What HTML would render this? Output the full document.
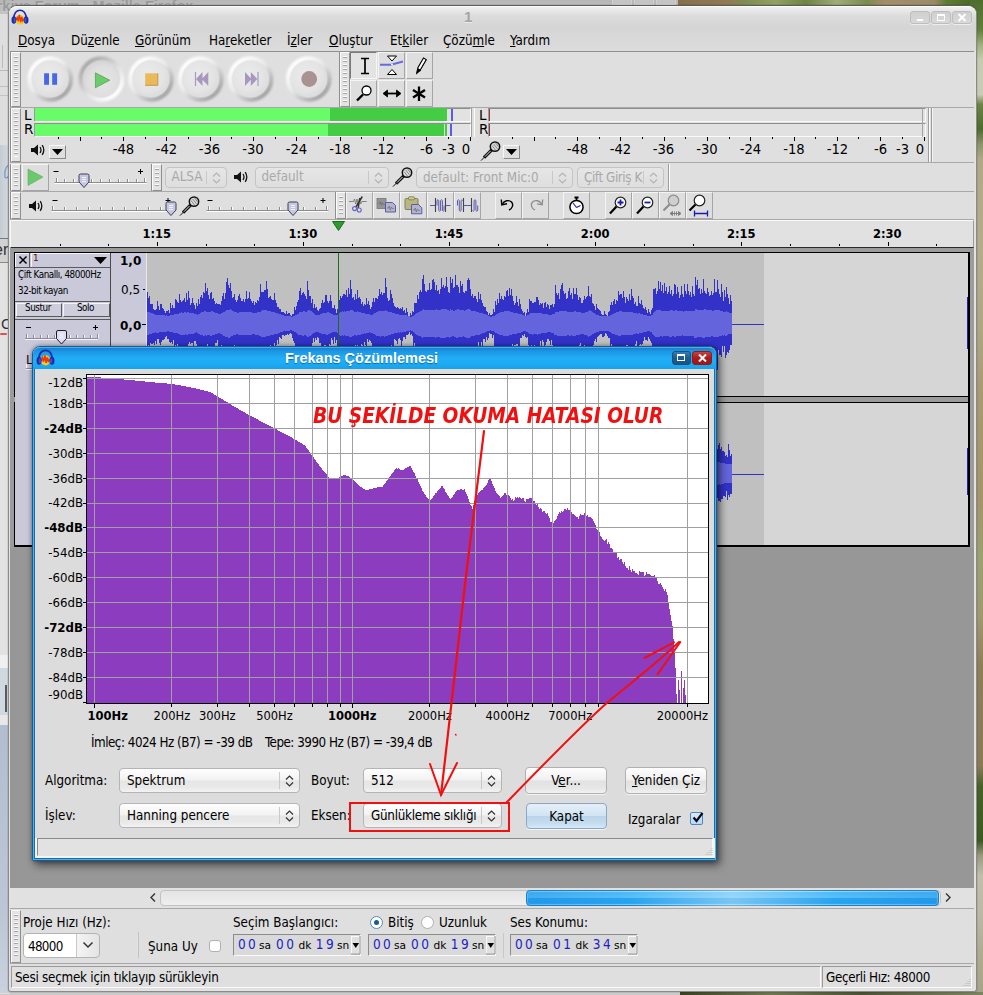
<!DOCTYPE html>
<html lang="tr"><head><meta charset="utf-8"><title>Audacity - Frekans Çözümlemesi</title>
<style>
*{box-sizing:border-box;margin:0;padding:0}
html,body{width:983px;height:995px;overflow:hidden;background:#9a9a9a}
body{font-family:"DejaVu Sans Condensed","Liberation Sans",sans-serif;font-size:13.3px;color:#000}
#root{position:absolute;left:0;top:0;width:983px;height:995px;overflow:hidden;background:#d9d9d9}
.a{position:absolute}
.t{position:absolute;white-space:nowrap;line-height:1}
.dv{font-family:"DejaVu Sans","Liberation Sans",sans-serif}
.dvb{font-family:"DejaVu Sans","Liberation Sans",sans-serif;font-weight:bold}
.lib{font-family:"Liberation Sans",sans-serif}
u{text-decoration:underline;text-underline-offset:1px}
.grab{position:absolute;width:10px;background-color:#e3e3e3;border:1px solid #fbfbfb;border-right-color:#8e8e8e;border-bottom-color:#8e8e8e;
 background-image:repeating-linear-gradient(to bottom,#fdfdfd 0,#fdfdfd 1px,#a4a4a4 1px,#a4a4a4 2px,transparent 2px,transparent 4px);background-size:4px calc(100% - 7px);background-position:2px 3px;background-repeat:no-repeat;box-shadow:-1px 0 0 #8e8e8e}
.tb{position:absolute;background:#dfdfdf}
.btn{position:absolute;background:#dedede;border:1px solid #f4f4f4;border-right-color:#a5a5a5;border-bottom-color:#a5a5a5}
.combo{position:absolute;border:1px solid #b4b4b4;border-radius:4px;background:linear-gradient(#fefefe 0,#f2f2f2 48%,#e6e6e6 52%,#e9e9e9 80%,#f3f3f3 100%);}
.combo.dis{background:linear-gradient(#e6e6e6,#dedede);border-color:#c4c4c4;color:#a9a9a9}
.combo .sep{position:absolute;top:3px;bottom:3px;width:1px;background:#c9c9c9;right:19px}
.combo svg{position:absolute;right:5px;top:50%;margin-top:-6px}
</style></head><body>
<div id="root">
<!-- desktop / background windows -->
<div class="a" style="left:0;top:0;width:983px;height:995px;background:#d6d6d6"></div>
<div class="a" style="left:0;top:0;width:680px;height:14px;background:linear-gradient(#b6b6b6,#c4c4c4)"></div>
<div class="t lib" style="left:-21px;top:-1px;font-size:14.500px;font-weight:bold;color:#9a9a9a;text-shadow:0 1px 0 #cfcfcf">Türkiye Forum - Mozilla Firefox</div>
<div class="a" style="left:612px;top:0;width:20px;height:5px;background:#c4c4c4;border:1px solid #d0d0d0;border-top:0"></div>
<div class="a" style="left:634px;top:0;width:20px;height:5px;background:#c4c4c4;border:1px solid #d0d0d0;border-top:0"></div>
<div class="a" style="left:656px;top:0;width:20px;height:5px;background:#c4c4c4;border:1px solid #d0d0d0;border-top:0"></div>
<!-- wallpaper top right & right strip -->
<div class="a" style="left:678px;top:0;width:305px;height:12px;background:linear-gradient(90deg,#86704c 0,#927a56 17%,#7e8a4e 21%,#92a062 32%,#6e8444 42%,#a0ac78 52%,#7a8c4c 62%,#a48e6a 68%,#9c8a66 84%,#5e7c34 88%,#4a6a28 96%,#5a7a34 100%)"></div>
<div class="a" style="left:970px;top:0;width:13px;height:995px;background:linear-gradient(180deg,#4e6e2e 0,#5f8038 3%,#9fb07c 4.500%,#c6cbb0 6%,#c9ccb4 9.500%,#6a8444 10.500%,#4e6c30 13%,#8c9468 14.500%,#b0a888 16%,#b4ac8c 25%,#aea684 33%,#a89a72 40%,#a4946c 50%,#9ca072 56%,#a09870 62%,#8e7e5a 67%,#8a7a58 77%,#46622a 79%,#3c5a22 84.500%,#9a9a80 86%,#c2beaa 88%,#bcb8a4 92%,#b0aa92 96%,#a8a288 100%)"></div>
<div class="a" style="left:0;top:992px;width:983px;height:3px;background:#c9c9c9"></div>
<div class="a" style="left:680px;top:992px;width:303px;height:3px;background:linear-gradient(90deg,#3a4020,#6d7550 30%,#4a5233 60%,#7b8360)"></div>
<!-- left strip: firefox window pieces -->
<div class="a" style="left:0;top:14px;width:10px;height:980px;background:#dedede"></div>
<div class="a" style="left:2px;top:45px;width:1px;height:23px;background:#bcbcbc"></div>
<div class="a" style="left:0;top:70px;width:10px;height:1px;background:#b8b8b8"></div>
<div class="a" style="left:0;top:86px;width:10px;height:1px;background:#c0c0c0"></div>
<div class="a" style="left:0;top:95px;width:10px;height:1px;background:#c4c4c4"></div>
<div class="a" style="left:0;top:145px;width:10px;height:93px;background:linear-gradient(90deg,#c4ccd4,#d6dadd)"></div>
<svg class="a" style="left:2px;top:164px" width="8" height="16" viewBox="0 0 8 16"><path d="M6.500 1 C3 4 2.500 9 3 13 C3.500 14.500 5.500 14 6.500 12" fill="none" stroke="#7a9acc" stroke-width="1.300"/></svg>
<div class="a" style="left:0;top:238px;width:10px;height:1px;background:#7a7a7a"></div>
<div class="a" style="left:0;top:239px;width:10px;height:23px;background:#d2d2d2"></div>
<div class="a" style="left:0;top:262px;width:10px;height:1px;background:#8a8a8a"></div>
<div class="a" style="left:0;top:263px;width:10px;height:392px;background:#e2e2e2"></div>
<div class="a" style="left:0;top:655px;width:10px;height:13px;background:#f0f0f0"></div>
<div class="a" style="left:0;top:668px;width:10px;height:47px;background:#d0d8e0"></div>
<div class="a" style="left:5px;top:685px;width:2px;height:27px;background:#5a5a5a"></div>
<div class="a" style="left:0;top:715px;width:10px;height:10px;background:#e8e8e8"></div>
<div class="a" style="left:0;top:725px;width:10px;height:268px;background:linear-gradient(#b2bed0,#bcc6d6 70%,#cad2de)"></div>
<div class="t lib" style="left:-6px;top:242px;font-size:16px;color:#333">er</div>
<div class="t lib" style="left:1px;top:316px;font-size:15px;color:#333">C</div>
<div class="a" style="left:0;top:333px;width:7px;height:2px;background:#e05050;border-radius:1px"></div>
<!-- main window frame -->
<div class="a" style="left:8px;top:5px;width:969px;height:987px;border-radius:9px 9px 3px 3px;background:#e2e2e2;border:1px solid #8a8a8a;border-top-color:#5c5c5c;box-shadow:0 0 0 1px rgba(0,0,0,.08)"></div>
<div class="a" style="left:10px;top:52px;width:964px;height:937px;background:#dfdfdf"></div>
<div class="a" style="left:9px;top:6px;width:967px;height:23px;border-radius:8px 8px 0 0;background:linear-gradient(#f0f0f0,#dcdcdc 40%,#d4d4d4);border-top:1px solid #fbfbfb"></div>
<div class="a" style="left:9px;top:29px;width:967px;height:22px;background:linear-gradient(#d6d6d6,#dcdcdc)"></div>
<div class="a" style="left:10px;top:51px;width:964px;height:1px;background:#8f8f8f"></div>
<div class="t lib" style="left:464px;top:9px;font-size:15px;font-weight:bold;color:#a2a2aa;text-shadow:0 1px 0 #ececec">1</div>
<!-- app icon -->
<svg class="a" style="left:11px;top:9px" width="18" height="17" viewBox="0 0 18 17"><path d="M2.800 10 C2.500 3.500 6 1.200 9 1.200 C12 1.200 15.500 3.500 15.200 10" fill="none" stroke="#1c2ca4" stroke-width="1.600"/><ellipse cx="9" cy="10.800" rx="4.600" ry="4.800" fill="#f8c81c"/><path d="M5 11 l1.200 -2.500 1 3.500 1.200 -6 1.200 7 1.100 -5 1 3.500 1.100 -1.500" fill="none" stroke="#ea3a12" stroke-width="1.500"/><ellipse cx="2.900" cy="11" rx="2.400" ry="3.800" fill="#1c2ca4"/><ellipse cx="15.100" cy="11" rx="2.400" ry="3.800" fill="#1c2ca4"/><ellipse cx="3.600" cy="11" rx="1.100" ry="2.600" fill="#3a52d8"/><ellipse cx="14.400" cy="11" rx="1.100" ry="2.600" fill="#3a52d8"/></svg>
<!-- window buttons -->
<div class="a" style="left:910px;top:11px;width:20px;height:13px;border-radius:3px;background:linear-gradient(#cfcfcf,#d9d9d9);border:1px solid #bdbdbd;box-shadow:0 1px 0 #eee"></div>
<div class="a" style="left:931px;top:11px;width:20px;height:13px;border-radius:3px;background:linear-gradient(#cfcfcf,#d9d9d9);border:1px solid #bdbdbd;box-shadow:0 1px 0 #eee"></div>
<div class="a" style="left:952px;top:11px;width:20px;height:13px;border-radius:3px;background:linear-gradient(#cfcfcf,#d9d9d9);border:1px solid #bdbdbd;box-shadow:0 1px 0 #eee"></div>
<div class="a" style="left:917px;top:19px;width:6px;height:2px;background:#fff"></div>
<div class="a" style="left:937px;top:14px;width:8px;height:7px;border:1px solid #fff;border-top-width:2px"></div>
<svg class="a" style="left:957px;top:13px" width="10" height="9" viewBox="0 0 10 9"><path d="M1.500 1 L8.500 8 M8.500 1 L1.500 8" stroke="#fff" stroke-width="2"/></svg>
<!-- menu -->
<div class="t" style="left:18px;top:34px"><u>D</u>osya</div>
<div class="t" style="left:71px;top:34px">Dü<u>z</u>enle</div>
<div class="t" style="left:135px;top:34px"><u>G</u>örünüm</div>
<div class="t" style="left:209px;top:34px">Ha<u>r</u>eketler</div>
<div class="t" style="left:287px;top:34px">İ<u>z</u>ler</div>
<div class="t" style="left:329px;top:34px"><u>O</u>luştur</div>
<div class="t" style="left:390px;top:34px">Et<u>k</u>iler</div>
<div class="t" style="left:443px;top:34px">Çözü<u>m</u>le</div>
<div class="t" style="left:510px;top:34px"><u>Y</u>ardım</div>
<!-- ===== control toolbar ===== -->
<div class="grab" style="left:11px;top:52px;height:55px"></div>
<svg class="a" style="left:20px;top:52px" width="320" height="55" viewBox="20 52 320 55">
<defs>
<linearGradient id="rup" x1="0.15" y1="0.1" x2="0.85" y2="0.9"><stop offset="0" stop-color="#ffffff"/><stop offset=".45" stop-color="#e9e9e9"/><stop offset="1" stop-color="#a2a2a2"/></linearGradient>
<linearGradient id="rdn" x1="0.15" y1="0.1" x2="0.85" y2="0.9"><stop offset="0" stop-color="#a8a8a8"/><stop offset=".55" stop-color="#e0e0e0"/><stop offset="1" stop-color="#ffffff"/></linearGradient>
<radialGradient id="dup" cx=".42" cy=".4" r=".6"><stop offset="0" stop-color="#ebebeb"/><stop offset=".7" stop-color="#e4e4e4"/><stop offset="1" stop-color="#dcdcdc"/></radialGradient>
<radialGradient id="ddn" cx=".55" cy=".58" r=".6"><stop offset="0" stop-color="#e6e6e6"/><stop offset=".7" stop-color="#dedede"/><stop offset="1" stop-color="#d2d2d2"/></radialGradient>
<filter id="bl" x="-20%" y="-20%" width="140%" height="140%"><feGaussianBlur stdDeviation="1.300"/></filter>
<g id="bup"><circle r="20.500" fill="none" stroke="url(#rup)" stroke-width="4.500" filter="url(#bl)"/><circle r="18.500" fill="url(#dup)"/></g>
<g id="bdn"><circle r="20.500" fill="none" stroke="url(#rdn)" stroke-width="4.500" filter="url(#bl)"/><circle r="18.500" fill="url(#ddn)"/></g>
</defs>
<use href="#bup" x="50.200" y="79"/><use href="#bdn" x="101.400" y="79"/><use href="#bup" x="151" y="79"/><use href="#bup" x="200.700" y="79"/><use href="#bup" x="250.600" y="79"/><use href="#bup" x="308.700" y="79"/>
<rect x="44.100" y="73.300" width="4.900" height="11.500" fill="#4868e8"/><rect x="52.200" y="73.300" width="4.900" height="11.500" fill="#4868e8"/>
<path d="M95.400 72.800 L109.800 80.200 L95.400 87.800 Z" fill="#6ccb6c" stroke="#4ea04e" stroke-width=".7"/>
<rect x="145.200" y="73.300" width="12.600" height="12" fill="#e9b95c"/><path d="M145.200 85.300 h12.600 v-12" fill="none" stroke="#c09848" stroke-width="1"/>
<path d="M195.500 72 v14" stroke="#a898c0" stroke-width="1.200"/><path d="M202.500 72 v14 l-6.500 -7z M208.300 72 v14 l-6.500 -7z" fill="#a898c0"/>
<path d="M258 72 v14" stroke="#a898c0" stroke-width="1.200"/><path d="M245 72 v14 l6.500 -7z M250.800 72 v14 l6.500 -7z" fill="#a898c0"/>
<circle cx="309.200" cy="79" r="7.900" fill="#a89292"/>
</svg>
<!-- ===== tools toolbar ===== -->
<div class="grab" style="left:340px;top:52px;height:55px"></div>
<div class="btn" style="left:350px;top:52px;width:27px;height:27px;background:#e3e3e3;border-color:#7a7a7a #f6f6f6 #f6f6f6 #7a7a7a"></div>
<div class="btn" style="left:378px;top:52px;width:27px;height:27px"></div>
<div class="btn" style="left:406px;top:52px;width:27px;height:27px"></div>
<div class="btn" style="left:350px;top:80px;width:27px;height:27px"></div>
<div class="btn" style="left:378px;top:80px;width:27px;height:27px"></div>
<div class="btn" style="left:406px;top:80px;width:27px;height:27px"></div>
<svg class="a" style="left:350px;top:52px" width="84" height="56" viewBox="0 0 84 56" fill="none" stroke="#000">
<path d="M11 6.500 h8 M15 6.500 v14.500 M11 21.500 h8" stroke-width="1.700"/>
<path d="M37.500 4 h9 l-4.500 5 z M37.500 22.500 h9 l-4.500 -5 z" fill="#fff" stroke-width="1"/><path d="M30 12.800 h11 l12 -3.300" stroke="#6a6ae0" stroke-width="2"/><circle cx="42" cy="12.600" r="1" fill="#fff" stroke="none"/>
<path d="M66.800 21 l1.200 -5.500 5.500 -9.500 2.800 1.600 -5.500 9.500 z" fill="#fff" stroke-width="1.100"/><path d="M66.600 21.500 l1.200 -5 3.200 1.800z" fill="#000" stroke-width=".6"/>
<circle cx="16.500" cy="38.500" r="4.500" fill="#fff" stroke-width="1.300"/><path d="M13 42.500 L7 48.500" stroke-width="2.400"/>
<path d="M34 41.500 h16" stroke-width="1.800"/><path d="M37.500 38 l-4.500 3.500 4.500 3.500 z M46.500 38 l4.500 3.500 -4.500 3.500 z" stroke-width=".8" fill="#000"/>
<path d="M69 34.500 v14.500 M63 38 l12 7.500 M75 38 l-12 7.500" stroke-width="2.300"/>
</svg>
<!-- ===== meter toolbar ===== -->
<div class="a" style="left:10px;top:107px;width:964px;height:1px;background:#a8a8a8"></div>
<div class="grab" style="left:11px;top:108px;height:54px"></div>
<div class="t dv" style="left:24px;top:109px;font-size:13.500px;line-height:13px">L</div>
<div class="t dv" style="left:24px;top:123px;font-size:13.500px;line-height:13px">R</div>
<div class="a" style="left:34px;top:108px;width:437px;height:14px;background:#e2e2e2;border:1px solid #fafafa;border-left-color:#9a9a9a;border-top-color:#8e8e8e"></div>
<div class="a" style="left:34px;top:123px;width:437px;height:14px;background:#e2e2e2;border:1px solid #fafafa;border-left-color:#9a9a9a;border-top-color:#8e8e8e"></div>
<div class="a" style="left:35px;top:108px;width:295px;height:13px;background:#68fc68"></div>
<div class="a" style="left:330px;top:108px;width:117px;height:13px;background:#44cc44"></div>
<div class="a" style="left:35px;top:124px;width:293px;height:12px;background:#68fc68"></div>
<div class="a" style="left:328px;top:124px;width:116px;height:12px;background:#44cc44"></div>
<div class="a" style="left:445px;top:124px;width:2px;height:12px;background:#44cc44"></div>
<div class="a" style="left:451px;top:109px;width:2px;height:12px;background:#5a5af0"></div>
<div class="a" style="left:450px;top:124px;width:2px;height:12px;background:#5a5af0"></div>
<div class="a" style="left:471px;top:108px;width:1px;height:29px;background:#a2a2a2"></div>
<div class="a" style="left:474px;top:108px;width:1px;height:29px;background:#fafafa"></div>
<div class="t dv" style="left:479px;top:109px;font-size:13.500px;line-height:13px">L</div>
<div class="t dv" style="left:479px;top:123px;font-size:13.500px;line-height:13px">R</div>
<div class="a" style="left:488px;top:108px;width:438px;height:14px;background:#e1e1e1;border:1px solid #fafafa;border-left-color:#9a9a9a;border-top-color:#8e8e8e"></div>
<div class="a" style="left:488px;top:123px;width:438px;height:14px;background:#e1e1e1;border:1px solid #fafafa;border-left-color:#9a9a9a;border-top-color:#8e8e8e"></div>
<div class="a" style="left:489px;top:109px;width:1px;height:12px;background:#a43434"></div>
<div class="a" style="left:489px;top:124px;width:1px;height:12px;background:#a43434"></div>
<div class="a" style="left:922px;top:108px;width:1px;height:29px;background:#a4a4a4"></div>
<div class="a" style="left:928px;top:108px;width:1px;height:54px;background:#9c9c9c"></div>
<div class="a" style="left:929px;top:108px;width:1px;height:54px;background:#fff"></div>
<div class="a" style="left:931px;top:108px;width:1px;height:54px;background:#9c9c9c"></div>
<div class="a" style="left:932px;top:108px;width:1px;height:54px;background:#f4f4f4"></div>
<svg class="a" style="left:0;top:137px" width="983" height="26" viewBox="0 0 983 26"><g font-family="DejaVu Sans,Liberation Sans,sans-serif" font-size="13.200" text-anchor="middle" fill="#000"><text x="123.5" y="17">-48</text><text x="166.5" y="17">-42</text><text x="209.5" y="17">-36</text><text x="253.0" y="17">-30</text><text x="296.5" y="17">-24</text><text x="340.0" y="17">-18</text><text x="383.5" y="17">-12</text><text x="426.5" y="17">-6</text><text x="448.5" y="17">-3</text><text x="466.0" y="17">0</text></g><g stroke="#000" stroke-width="1"><path d="M58.5 0 v2"/><path d="M80.5 0 v4"/><path d="M101.5 0 v2"/><path d="M123.5 0 v4"/><path d="M145.5 0 v2"/><path d="M166.5 0 v4"/><path d="M188.5 0 v2"/><path d="M210.5 0 v4"/><path d="M231.5 0 v2"/><path d="M253.5 0 v4"/><path d="M275.5 0 v2"/><path d="M296.5 0 v4"/><path d="M318.5 0 v2"/><path d="M340.5 0 v4"/><path d="M361.5 0 v2"/><path d="M383.5 0 v4"/><path d="M404.5 0 v2"/><path d="M426.5 0 v4"/><path d="M448.5 0 v2"/><path d="M470.5 0 v4"/></g></svg>
<svg class="a" style="left:0;top:137px" width="983" height="26" viewBox="0 0 983 26"><g font-family="DejaVu Sans,Liberation Sans,sans-serif" font-size="13.200" text-anchor="middle" fill="#000"><text x="577.5" y="17">-48</text><text x="620.5" y="17">-42</text><text x="663.5" y="17">-36</text><text x="707.0" y="17">-30</text><text x="750.5" y="17">-24</text><text x="794.0" y="17">-18</text><text x="837.5" y="17">-12</text><text x="880.5" y="17">-6</text><text x="902.5" y="17">-3</text><text x="920.0" y="17">0</text></g><g stroke="#000" stroke-width="1"><path d="M512.5 0 v2"/><path d="M534.5 0 v4"/><path d="M555.5 0 v2"/><path d="M577.5 0 v4"/><path d="M599.5 0 v2"/><path d="M620.5 0 v4"/><path d="M642.5 0 v2"/><path d="M664.5 0 v4"/><path d="M685.5 0 v2"/><path d="M707.5 0 v4"/><path d="M729.5 0 v2"/><path d="M750.5 0 v4"/><path d="M772.5 0 v2"/><path d="M794.5 0 v4"/><path d="M815.5 0 v2"/><path d="M837.5 0 v4"/><path d="M858.5 0 v2"/><path d="M880.5 0 v4"/><path d="M902.5 0 v2"/><path d="M924.5 0 v4"/></g></svg>
<svg class="a" style="left:30px;top:143px" width="16" height="14" viewBox="0 0 16 14"><path d="M1 5 h3 l4 -3.500 v11 l-4 -3.500 h-3 z" fill="#111"/><path d="M10 4 q2 3 0 6 M12.200 2.200 q3.200 4.800 0 9.600" fill="none" stroke="#111" stroke-width="1.300"/></svg>
<div class="btn" style="left:49px;top:145px;width:17px;height:14px;border-color:#f8f8f8 #8a8a8a #8a8a8a #f8f8f8"></div><svg class="a" style="left:52px;top:149px" width="11" height="6" viewBox="0 0 11 6"><path d="M0 0 h11 l-5.500 6z" fill="#000"/></svg>
<div class="btn" style="left:503px;top:145px;width:17px;height:14px;border-color:#f8f8f8 #8a8a8a #8a8a8a #f8f8f8"></div><svg class="a" style="left:506px;top:149px" width="11" height="6" viewBox="0 0 11 6"><path d="M0 0 h11 l-5.500 6z" fill="#000"/></svg>
<svg class="a" style="left:480px;top:140px" width="22" height="22" viewBox="0 0 22 22"><path d="M1 20.600 L5 16.500" stroke="#111" stroke-width="1"/><path d="M4 17.700 L11.800 9.800" stroke="#111" stroke-width="3.200"/><path d="M5 16.600 L10.500 11" stroke="#f4f4f4" stroke-width=".9"/><circle cx="15" cy="6.600" r="4.700" fill="#dadada" stroke="#111" stroke-width="1.500"/><path d="M12 5.500 l3.500 4.500 M13.500 3.800 l4 5 M15.500 2.800 l3 4" stroke="#8a8a8a" stroke-width="1"/></svg>
<div class="a" style="left:10px;top:162px;width:964px;height:1px;background:#a8a8a8"></div>
<!-- ===== transcription toolbar ===== -->
<div class="grab" style="left:11px;top:164px;height:27px"></div>
<div class="btn" style="left:22px;top:164px;width:27px;height:27px"></div>
<svg class="a" style="left:22px;top:164px" width="27" height="27" viewBox="0 0 27 27"><path d="M6 5 L21 13 L6 21.500 Z" fill="#6cc86c" stroke="#5cb05c" stroke-width=".6"/></svg>
<svg class="a" style="left:0;top:168px" width="983" height="24" viewBox="0 0 983 24"><path d="M54.5 14.500 H146.5" stroke="#8c8c8c"/><path d="M54.5 15.500 H146.5" stroke="#fff"/><path d="M56.5 10 V14" stroke="#8c8c8c"/><path d="M57.5 10 V14" stroke="#fff"/><path d="M64.5 11 V14" stroke="#8c8c8c"/><path d="M65.5 11 V14" stroke="#fff"/><path d="M73.5 11 V14" stroke="#8c8c8c"/><path d="M74.5 11 V14" stroke="#fff"/><path d="M82.5 11 V14" stroke="#8c8c8c"/><path d="M83.5 11 V14" stroke="#fff"/><path d="M91.5 11 V14" stroke="#8c8c8c"/><path d="M92.5 11 V14" stroke="#fff"/><path d="M100.5 11 V14" stroke="#8c8c8c"/><path d="M101.5 11 V14" stroke="#fff"/><path d="M109.5 11 V14" stroke="#8c8c8c"/><path d="M110.5 11 V14" stroke="#fff"/><path d="M118.5 11 V14" stroke="#8c8c8c"/><path d="M119.5 11 V14" stroke="#fff"/><path d="M127.5 11 V14" stroke="#8c8c8c"/><path d="M128.5 11 V14" stroke="#fff"/><path d="M136.5 11 V14" stroke="#8c8c8c"/><path d="M137.5 11 V14" stroke="#fff"/><path d="M144.5 10 V14" stroke="#8c8c8c"/><path d="M145.5 10 V14" stroke="#fff"/><path d="M53.5 3.5 h5 M138.0 3.5 h5 M140.5 1.0 v5" stroke="#000" stroke-width="1"/><path d="M79.0 7.500 q0 -1.500 1.500 -1.500 h7 q1.500 0 1.500 1.500 v6.500 l-5 5.500 l-5 -5.500 z" fill="#c6c6e6" stroke="#3c3c50" stroke-width="1"/><path d="M82.0 9.500 h4 M82.0 11.500 h4 M82.0 13.500 h4" stroke="#f4f4ff" stroke-width="1"/></svg>
<div class="a" style="left:10px;top:191px;width:964px;height:1px;background:#a8a8a8"></div>
<!-- ===== device toolbar ===== -->
<div class="grab" style="left:152px;top:164px;height:27px"></div>
<div class="combo dis" style="left:165px;top:167px;width:62px;height:21px"><div class="t" style="left:5.5px;top:2.3px;font-size:13.3px">ALSA</div><div class="sep"></div><svg width="9" height="12" viewBox="0 0 9 12"><path d="M1 4.500 L4.500 1 L8 4.500 M1 7.500 L4.500 11 L8 7.500" fill="none" stroke="#b4b4b4" stroke-width="1.200"/></svg></div>
<div class="combo dis" style="left:255px;top:167px;width:134px;height:21px"><div class="t" style="left:5.5px;top:2.3px;font-size:13.3px">default</div><div class="sep"></div><svg width="9" height="12" viewBox="0 0 9 12"><path d="M1 4.500 L4.500 1 L8 4.500 M1 7.500 L4.500 11 L8 7.500" fill="none" stroke="#b4b4b4" stroke-width="1.200"/></svg></div>
<div class="combo dis" style="left:416px;top:167px;width:157px;height:21px;overflow:hidden"><div class="t" style="left:6px;top:3px;font-size:13.3px">default: Front Mic:0</div><div class="sep"></div><svg width="9" height="12" viewBox="0 0 9 12"><path d="M1 4.500 L4.500 1 L8 4.500 M1 7.500 L4.500 11 L8 7.500" fill="none" stroke="#b4b4b4" stroke-width="1.200"/></svg></div>
<div class="combo dis" style="left:577px;top:167px;width:87px;height:21px;overflow:hidden"><div class="t" style="left:6px;top:3px;font-size:13.3px;letter-spacing:-.42px">Çift Giriş K</div><div class="sep"></div><svg width="9" height="12" viewBox="0 0 9 12"><path d="M1 4.500 L4.500 1 L8 4.500 M1 7.500 L4.500 11 L8 7.500" fill="none" stroke="#b4b4b4" stroke-width="1.200"/></svg></div>
<svg class="a" style="left:233px;top:170px" width="16" height="14" viewBox="0 0 16 14"><path d="M1 5 h3 l4 -3.500 v11 l-4 -3.500 h-3 z" fill="#111"/><path d="M10 4 q2 3 0 6 M12.200 2.200 q3.200 4.800 0 9.600" fill="none" stroke="#111" stroke-width="1.300"/></svg>
<svg class="a" style="left:392px;top:166px" width="22" height="22" viewBox="0 0 22 22"><path d="M1 20.600 L5 16.500" stroke="#111" stroke-width="1"/><path d="M4 17.700 L11.800 9.800" stroke="#111" stroke-width="3.200"/><path d="M5 16.600 L10.500 11" stroke="#f4f4f4" stroke-width=".9"/><circle cx="15" cy="6.600" r="4.700" fill="#dadada" stroke="#111" stroke-width="1.500"/><path d="M12 5.500 l3.500 4.500 M13.500 3.800 l4 5 M15.500 2.800 l3 4" stroke="#8a8a8a" stroke-width="1"/></svg>
<div class="a" style="left:668px;top:164px;width:1px;height:27px;background:#9c9c9c"></div><div class="a" style="left:669px;top:164px;width:1px;height:27px;background:#fff"></div>
<!-- ===== mixer toolbar ===== -->
<div class="grab" style="left:11px;top:192px;height:27px"></div>
<svg class="a" style="left:28px;top:199px" width="16" height="14" viewBox="0 0 16 14"><path d="M1 5 h3 l4 -3.500 v11 l-4 -3.500 h-3 z" fill="#111"/><path d="M10 4 q2 3 0 6 M12.200 2.200 q3.200 4.800 0 9.600" fill="none" stroke="#111" stroke-width="1.300"/></svg>
<svg class="a" style="left:0;top:196px" width="983" height="24" viewBox="0 0 983 24"><path d="M51.5 14.500 H173.5" stroke="#8c8c8c"/><path d="M51.5 15.500 H173.5" stroke="#fff"/><path d="M52.5 10 V14" stroke="#8c8c8c"/><path d="M53.5 10 V14" stroke="#fff"/><path d="M64.5 11 V14" stroke="#8c8c8c"/><path d="M65.5 11 V14" stroke="#fff"/><path d="M76.5 11 V14" stroke="#8c8c8c"/><path d="M77.5 11 V14" stroke="#fff"/><path d="M88.5 11 V14" stroke="#8c8c8c"/><path d="M89.5 11 V14" stroke="#fff"/><path d="M100.5 11 V14" stroke="#8c8c8c"/><path d="M101.5 11 V14" stroke="#fff"/><path d="M112.5 11 V14" stroke="#8c8c8c"/><path d="M113.5 11 V14" stroke="#fff"/><path d="M124.5 11 V14" stroke="#8c8c8c"/><path d="M125.5 11 V14" stroke="#fff"/><path d="M136.5 11 V14" stroke="#8c8c8c"/><path d="M137.5 11 V14" stroke="#fff"/><path d="M148.5 11 V14" stroke="#8c8c8c"/><path d="M149.5 11 V14" stroke="#fff"/><path d="M160.5 11 V14" stroke="#8c8c8c"/><path d="M161.5 11 V14" stroke="#fff"/><path d="M172.5 10 V14" stroke="#8c8c8c"/><path d="M173.5 10 V14" stroke="#fff"/><path d="M52.5 4.5 h5 M165.5 4.5 h5 M168.0 2.0 v5" stroke="#000" stroke-width="1"/><path d="M166.0 7.500 q0 -1.500 1.500 -1.500 h7 q1.500 0 1.500 1.500 v6.500 l-5 5.500 l-5 -5.500 z" fill="#c6c6e6" stroke="#3c3c50" stroke-width="1"/><path d="M169.0 9.500 h4 M169.0 11.500 h4 M169.0 13.500 h4" stroke="#f4f4ff" stroke-width="1"/></svg>
<svg class="a" style="left:179px;top:195px" width="22" height="22" viewBox="0 0 22 22"><path d="M1 20.600 L5 16.500" stroke="#111" stroke-width="1"/><path d="M4 17.700 L11.800 9.800" stroke="#111" stroke-width="3.200"/><path d="M5 16.600 L10.500 11" stroke="#f4f4f4" stroke-width=".9"/><circle cx="15" cy="6.600" r="4.700" fill="#dadada" stroke="#111" stroke-width="1.500"/><path d="M12 5.500 l3.500 4.500 M13.500 3.800 l4 5 M15.500 2.800 l3 4" stroke="#8a8a8a" stroke-width="1"/></svg>
<svg class="a" style="left:0;top:196px" width="983" height="24" viewBox="0 0 983 24"><path d="M206.5 14.500 H328.5" stroke="#8c8c8c"/><path d="M206.5 15.500 H328.5" stroke="#fff"/><path d="M208.5 10 V14" stroke="#8c8c8c"/><path d="M209.5 10 V14" stroke="#fff"/><path d="M219.5 11 V14" stroke="#8c8c8c"/><path d="M220.5 11 V14" stroke="#fff"/><path d="M231.5 11 V14" stroke="#8c8c8c"/><path d="M232.5 11 V14" stroke="#fff"/><path d="M243.5 11 V14" stroke="#8c8c8c"/><path d="M244.5 11 V14" stroke="#fff"/><path d="M255.5 11 V14" stroke="#8c8c8c"/><path d="M256.5 11 V14" stroke="#fff"/><path d="M267.5 11 V14" stroke="#8c8c8c"/><path d="M268.5 11 V14" stroke="#fff"/><path d="M279.5 11 V14" stroke="#8c8c8c"/><path d="M280.5 11 V14" stroke="#fff"/><path d="M291.5 11 V14" stroke="#8c8c8c"/><path d="M292.5 11 V14" stroke="#fff"/><path d="M303.5 11 V14" stroke="#8c8c8c"/><path d="M304.5 11 V14" stroke="#fff"/><path d="M315.5 11 V14" stroke="#8c8c8c"/><path d="M316.5 11 V14" stroke="#fff"/><path d="M326.5 10 V14" stroke="#8c8c8c"/><path d="M327.5 10 V14" stroke="#fff"/><path d="M207.5 4.5 h5 M320.5 4.5 h5 M323.0 2.0 v5" stroke="#000" stroke-width="1"/><path d="M288.0 7.500 q0 -1.500 1.500 -1.500 h7 q1.500 0 1.500 1.500 v6.500 l-5 5.500 l-5 -5.500 z" fill="#c6c6e6" stroke="#3c3c50" stroke-width="1"/><path d="M291.0 9.500 h4 M291.0 11.500 h4 M291.0 13.500 h4" stroke="#f4f4ff" stroke-width="1"/></svg>
<!-- ===== edit toolbar ===== -->
<div class="grab" style="left:336px;top:192px;height:27px"></div>
<div class="btn" style="left:346px;top:192px;width:27px;height:27px"></div>
<div class="btn" style="left:373px;top:192px;width:27px;height:27px"></div>
<div class="btn" style="left:400px;top:192px;width:27px;height:27px"></div>
<div class="btn" style="left:427px;top:192px;width:27px;height:27px"></div>
<div class="btn" style="left:454px;top:192px;width:27px;height:27px"></div>
<div class="btn" style="left:495px;top:192px;width:27px;height:27px"></div>
<div class="btn" style="left:522px;top:192px;width:27px;height:27px"></div>
<div class="btn" style="left:563px;top:192px;width:27px;height:27px"></div>
<div class="btn" style="left:605px;top:192px;width:27px;height:27px"></div>
<div class="btn" style="left:632px;top:192px;width:27px;height:27px"></div>
<div class="btn" style="left:659px;top:192px;width:27px;height:27px"></div>
<div class="btn" style="left:686px;top:192px;width:27px;height:27px"></div>
<div class="a" style="left:10px;top:219px;width:964px;height:1px;background:#a8a8a8"></div>
<svg class="a" style="left:346px;top:192px" width="370" height="27" viewBox="0 0 370 27" fill="none">
<!-- cut -->
<g stroke="#777" stroke-width=".9"><path d="M3 9.500 h4.500 l1 -2.500 1.200 5 1.300 -5 1.200 5 1.300 -5 1.200 5 1 -2.500 h5"/></g>
<path d="M16.300 4.500 L9.800 15.200 M13.800 6 L12.200 16" stroke="#333" stroke-width="1.500"/>
<circle cx="8.600" cy="16.600" r="2" stroke="#6464c4" stroke-width="1.100"/><circle cx="13.200" cy="18" r="2" stroke="#6464c4" stroke-width="1.100"/>
<!-- copy -->
<g transform="translate(27 0)"><rect x="4" y="6.500" width="9" height="10" fill="#949494" stroke="#777" stroke-width=".8"/><path d="M12.500 10.500 h7 l3 3 v6.500 h-10 z" fill="#b4b4c8" stroke="#5a5ab0"/><path d="M5 11.500 h1.500 l.8 -2 1 4 1 -3 1 2 h1.500 M14 16 h1.500 l.8 -2 1 4 1 -3 1 1.500 h1.500" stroke="#6c6c6c" stroke-width=".7"/></g>
<!-- paste -->
<g transform="translate(54 0)"><rect x="5" y="6.500" width="13" height="11" rx="1.200" fill="#bab680" stroke="#77775a" stroke-width=".9"/><rect x="8.500" y="4.800" width="6" height="3" rx="1" fill="#d0cc90" stroke="#77774a" stroke-width=".8"/><path d="M11.500 12.500 h7 l3.300 3.300 v6 h-10.300 z" fill="#b4b4c8" stroke="#5a5ab0"/><path d="M13 18 h1.500 l.8 -2 1 4 1 -3 1 1.500 h1.500" stroke="#6c6c6c" stroke-width=".7"/></g>
<!-- trim -->
<g transform="translate(81 0)" stroke="#5858b0" stroke-width="1"><path d="M3 13.500 h5.500 M18.500 13.500 h5"/><path d="M8.500 6 v14 M18.500 6 v14" stroke="#444" stroke-width="1.100"/><path d="M10 13.500 v-5 q.9 -1.500 1.800 0 v10 q.9 1.500 1.800 0 v-10 q.9 -1.500 1.800 0 v10 q.8 1.500 1.600 0 v-5"/></g>
<!-- silence -->
<g transform="translate(108 0)" stroke="#5858b0" stroke-width="1"><path d="M9.500 13.500 h8"/><path d="M3.500 13.500 v-5 q.9 -1.500 1.800 0 v10 q.9 1.500 1.800 0 v-10 q.8 -1.500 1.600 0 M18.500 18.500 q.8 1.500 1.600 0 v-10 q.9 -1.500 1.800 0 v10 q.9 1.500 1.800 0 v-5"/><path d="M9.500 6 v14 M17.500 6 v14" stroke="#444" stroke-width="1.100"/></g>
<!-- undo -->
<g transform="translate(149 0)"><path d="M7.500 12 C9 8.500 14 7.500 16.500 10 C18.800 12.500 17.500 16.500 14 18" stroke="#000" stroke-width="1.400"/><path d="M6.300 7.500 L6.800 12.800 L12 11.800" stroke="#000" stroke-width="1.400"/></g>
<!-- redo -->
<g transform="translate(176 0)"><path d="M19.500 12 C18 8.500 13 7.500 10.500 10 C8.200 12.500 9.500 16.500 13 18" stroke="#8c8c8c" stroke-width="1.300"/><path d="M20.700 7.500 L20.200 12.800 L15 11.800" stroke="#8c8c8c" stroke-width="1.300"/></g>
<!-- sync clock -->
<g transform="translate(217 0)"><circle cx="13.500" cy="15" r="6.600" fill="#fff" stroke="#000" stroke-width="1.500"/><path d="M11.500 5.500 h4 M13.500 5.500 v3" stroke="#000" stroke-width="1.800"/><path d="M13.500 15.500 l-3.500 -4.500 M13.500 15.500 l4 -2" stroke="#2222aa" stroke-width="1.200"/></g>
<!-- zoom in -->
<g transform="translate(259 0)"><path d="M11.500 14.500 L5 21.500" stroke="#000" stroke-width="2.200"/><circle cx="15.500" cy="10.500" r="5.300" fill="#fff" stroke="#222" stroke-width="1.200"/><path d="M12.500 10.500 h6 M15.500 7.500 v6" stroke="#1a1ab0" stroke-width="1.800"/></g>
<!-- zoom out -->
<g transform="translate(286 0)"><path d="M11.500 14.500 L5 21.500" stroke="#000" stroke-width="2.200"/><circle cx="15.500" cy="10.500" r="5.300" fill="#fff" stroke="#222" stroke-width="1.200"/><path d="M12.500 10.500 h6" stroke="#1a1ab0" stroke-width="1.800"/></g>
<!-- zoom sel (disabled) -->
<g transform="translate(313 0)"><path d="M10.500 12.500 L4.500 18.500" stroke="#8c8c8c" stroke-width="2.200"/><circle cx="14.500" cy="8.500" r="5.300" fill="#cfcfcf" stroke="#8c8c8c" stroke-width="1.200"/><path d="M11 21.500 h11 M11 21.500 l2.500 -2 v4z M22 21.500 l-2.500 -2 v4z M15.500 19.500 v4 M17.500 19.500 v4" stroke="#7c7c7c" stroke-width=".9" fill="#7c7c7c"/></g>
<!-- zoom fit -->
<g transform="translate(340 0)"><path d="M9.500 12.500 L3.500 18.500" stroke="#000" stroke-width="2.200"/><circle cx="13.500" cy="8.500" r="5.300" fill="#fff" stroke="#222" stroke-width="1.200"/><path d="M9 21.500 h12 M8.500 18.500 v6 M21.500 18.500 v6" stroke="#1a1ab0" stroke-width="1.300"/></g>
</svg>
<!-- ===== ruler ===== -->
<div class="a" style="left:10px;top:220px;width:964px;height:28px;background:#e1e1e1;border-top:1px solid #f8f8f8;border-left:1px solid #f8f8f8;border-right:1px solid #9a9a9a;border-bottom:1px solid #2a2a2a"></div>
<svg class="a" style="left:0;top:220px" width="983" height="28" viewBox="0 0 983 28"><g font-family="DejaVu Sans,Liberation Sans,sans-serif" font-weight="bold" font-size="11.500" text-anchor="middle" fill="#000"><text x="156.8" y="18">1:15</text><text x="302.9" y="18">1:30</text><text x="449.0" y="18">1:45</text><text x="595.1" y="18">2:00</text><text x="741.2" y="18">2:15</text><text x="887.3" y="18">2:30</text></g><g stroke="#000"><path d="M60.5 24 V26"/><path d="M108.5 24 V26"/><path d="M157.5 22 V26"/><path d="M206.5 24 V26"/><path d="M254.5 24 V26"/><path d="M303.5 22 V26"/><path d="M352.5 24 V26"/><path d="M400.5 24 V26"/><path d="M449.5 22 V26"/><path d="M498.5 24 V26"/><path d="M547.5 24 V26"/><path d="M595.5 22 V26"/><path d="M644.5 24 V26"/><path d="M693.5 24 V26"/><path d="M741.5 22 V26"/><path d="M790.5 24 V26"/><path d="M839.5 24 V26"/><path d="M888.5 22 V26"/><path d="M936.5 24 V26"/></g><path d="M332.500 1.500 h12 l-6 9z" fill="#2c9c2c" stroke="#1c701c" stroke-width="1"/></svg>
<!-- ===== track panel ===== -->
<div class="a" style="left:10px;top:248px;width:964px;height:300px;background:#9b9b9b"></div>
<div class="a" style="left:10px;top:548px;width:964px;height:340px;background:#979797"></div>
<div class="a" style="left:14px;top:252px;width:956px;height:145px;background:#d6d6d6;border:1px solid #000;border-right-width:2px"></div>
<div class="a" style="left:14px;top:402px;width:956px;height:145px;background:#d6d6d6;border:1px solid #000;border-right-width:2px;border-bottom-width:2px"></div>
<div class="a" style="left:968px;top:397px;width:2px;height:6px;background:#000"></div>
<div class="a" style="left:15px;top:253px;width:96px;height:292px;background:#c9c9d9"></div>
<div class="a" style="left:15px;top:397px;width:96px;height:5px;background:#c9c9d9"></div>
<div class="a" style="left:110px;top:253px;width:1px;height:143px;background:#4a4a4a"></div>
<div class="a" style="left:110px;top:403px;width:1px;height:142px;background:#4a4a4a"></div>
<div class="a" style="left:111px;top:253px;width:36px;height:143px;background:#c9c9d9"></div>
<div class="a" style="left:111px;top:403px;width:36px;height:142px;background:#c9c9d9"></div>
<div class="a" style="left:146px;top:253px;width:1px;height:143px;background:#e8e8f0"></div>
<div class="a" style="left:147px;top:253px;width:617px;height:143px;background:#c0c0c0"></div>
<div class="a" style="left:147px;top:403px;width:617px;height:142px;background:#c0c0c0"></div>
<div class="a" style="left:15px;top:267px;width:95px;height:1px;background:#5a5a5a"></div>
<div class="a" style="left:29px;top:253px;width:1px;height:14px;background:#5a5a5a"></div>
<div class="a" style="left:15px;top:253px;width:14px;height:14px;border:1px solid #f4f4fa;border-right:0;border-bottom:0"></div>
<div class="a" style="left:31px;top:253px;width:79px;height:14px;border:1px solid #f4f4fa;border-right:0;border-bottom:0"></div>
<svg class="a" style="left:18px;top:255px" width="10" height="10" viewBox="0 0 10 10"><path d="M1.500 1.500 L8.500 8.500 M8.500 1.500 L1.500 8.500" stroke="#000" stroke-width="1.500"/></svg>
<div class="t dv" style="left:33px;top:254px;font-size:9px;color:#5a1010">1</div>
<svg class="a" style="left:94px;top:257px" width="13" height="7" viewBox="0 0 13 7"><path d="M0 0 h13 l-6.500 7z" fill="#000"/></svg>
<div class="t" style="left:18px;top:270px;font-size:9.800px;color:#000;letter-spacing:-.45px">Çift Kanallı, 48000Hz</div>
<div class="t" style="left:18px;top:285.500px;font-size:9.800px;color:#000;letter-spacing:-.45px">32-bit kayan</div>
<div class="a" style="left:15px;top:301px;width:95px;height:1px;background:#5a5a5a"></div>
<div class="a" style="left:16px;top:303px;width:46px;height:14px;background:#cdcddc;border:1px solid #f4f4fa;border-right-color:#5a5a5a;border-bottom-color:#5a5a5a"></div>
<div class="a" style="left:63px;top:303px;width:47px;height:14px;background:#cdcddc;border:1px solid #f4f4fa;border-right-color:#5a5a5a;border-bottom-color:#5a5a5a"></div>
<div class="t" style="left:15px;top:302.500px;width:46px;text-align:center;font-size:9.800px;letter-spacing:-.4px">Sustur</div>
<div class="t" style="left:63px;top:302.500px;width:45px;text-align:center;font-size:9.800px;letter-spacing:-.4px">Solo</div>
<div class="a" style="left:15px;top:319px;width:95px;height:1px;background:#5a5a5a"></div>
<svg class="a" style="left:13px;top:321px" width="97" height="26" viewBox="0 0 97 26"><path d="M13 6.500 h5 M80 6.500 h5 M82.500 4 v5" stroke="#000"/><path d="M12 17.500 H85" stroke="#8c8c9c"/><path d="M12 18.500 H85" stroke="#f4f4fa"/><path d="M13.5 13 V17" stroke="#8c8c9c"/><path d="M14.5 13 V17" stroke="#f4f4fa"/><path d="M20.5 14 V17" stroke="#8c8c9c"/><path d="M21.5 14 V17" stroke="#f4f4fa"/><path d="M27.5 14 V17" stroke="#8c8c9c"/><path d="M28.5 14 V17" stroke="#f4f4fa"/><path d="M34.5 14 V17" stroke="#8c8c9c"/><path d="M35.5 14 V17" stroke="#f4f4fa"/><path d="M41.5 14 V17" stroke="#8c8c9c"/><path d="M42.5 14 V17" stroke="#f4f4fa"/><path d="M48.5 14 V17" stroke="#8c8c9c"/><path d="M49.5 14 V17" stroke="#f4f4fa"/><path d="M56.5 14 V17" stroke="#8c8c9c"/><path d="M57.5 14 V17" stroke="#f4f4fa"/><path d="M63.5 14 V17" stroke="#8c8c9c"/><path d="M64.5 14 V17" stroke="#f4f4fa"/><path d="M70.5 14 V17" stroke="#8c8c9c"/><path d="M71.5 14 V17" stroke="#f4f4fa"/><path d="M77.5 14 V17" stroke="#8c8c9c"/><path d="M78.5 14 V17" stroke="#f4f4fa"/><path d="M84.5 13 V17" stroke="#8c8c9c"/><path d="M85.5 13 V17" stroke="#f4f4fa"/><path d="M43.500 11 q0 -1.500 1.500 -1.500 h7 q1.500 0 1.500 1.500 v6.500 l-5 5.500 l-5 -5.500 z" fill="#dcdcf2" stroke="#1c1c2c"/><path d="M46.500 13 h4 M46.500 15 h4 M46.500 17 h4" stroke="#f4f4ff"/></svg>
<div class="t dv" style="left:26px;top:353.500px;font-size:12px;color:#1a0a0a">L</div>
<div class="a" style="left:26px;top:368px;width:8px;height:1px;background:#8c8c9c"></div><div class="a" style="left:26px;top:369px;width:8px;height:1px;background:#f4f4fa"></div><div class="a" style="left:26px;top:364px;width:1px;height:4px;background:#f4f4fa"></div>
<div class="t dvb" style="left:120px;top:255px;font-size:12px">1,0</div>
<div class="t dv" style="left:121px;top:284px;font-size:12px">0,5</div>
<div class="t dvb" style="left:120px;top:319.500px;font-size:12px">0,0</div>
<div class="a" style="left:143px;top:289px;width:2px;height:1px;background:#000"></div>
<div class="a" style="left:142px;top:324px;width:4px;height:1px;background:#000"></div>
<svg class="a" style="left:0;top:253px" width="983" height="293" viewBox="0 253 983 293" shape-rendering="crispEdges">
<path d="M147 292.3V292.3h1V297.8h1V296.3h1V304.2h1V304.4h1V303.9h1V308.6h1V310.0h1V310.2h1V309.2h1V301.2h1V305.8h1V310.4h1V304.1h1V304.0h1V308.1h1V308.9h1V311.3h1V312.8h1V310.7h1V311.0h1V310.0h1V312.8h1V303.2h1V307.5h1V305.0h1V308.4h1V307.6h1V299.3h1V300.2h1V301.8h1V303.0h1V293.7h1V299.9h1V302.2h1V301.3h1V299.9h1V298.2h1V302.1h1V293.2h1V299.5h1V291.4h1V298.0h1V305.0h1V303.1h1V297.9h1V303.2h1V304.8h1V308.7h1V303.1h1V305.9h1V298.9h1V304.0h1V297.2h1V295.0h1V298.0h1V291.6h1V293.4h1V282.8h1V291.2h1V287.7h1V295.1h1V298.7h1V293.0h1V291.6h1V298.9h1V298.0h1V300.6h1V303.5h1V302.8h1V303.5h1V303.6h1V303.8h1V304.8h1V301.3h1V296.3h1V293.3h1V298.7h1V293.4h1V281.9h1V278.1h1V285.3h1V287.8h1V283.1h1V291.4h1V298.4h1V296.8h1V293.5h1V299.7h1V301.9h1V300.1h1V296.0h1V293.7h1V298.2h1V300.7h1V300.8h1V299.4h1V302.2h1V299.3h1V291.4h1V299.2h1V298.0h1V292.0h1V298.5h1V301.4h1V302.6h1V300.8h1V304.5h1V302.1h1V303.3h1V300.3h1V301.1h1V296.9h1V284.4h1V292.4h1V292.3h1V291.5h1V290.0h1V290.3h1V280.6h1V289.4h1V297.6h1V297.3h1V295.8h1V299.4h1V300.0h1V299.5h1V293.4h1V299.6h1V302.6h1V306.6h1V307.0h1V309.3h1V309.0h1V311.5h1V311.5h1V311.9h1V312.8h1V313.6h1V310.6h1V314.0h1V313.2h1V312.9h1V315.2h1V316.4h1V313.6h1V314.3h1V306.8h1V310.0h1V305.6h1V302.2h1V299.9h1V291.1h1V287.8h1V295.1h1V293.0h1V291.7h1V293.6h1V295.9h1V298.6h1V281.0h1V289.7h1V295.8h1V296.0h1V302.6h1V298.5h1V308.1h1V303.5h1V307.7h1V307.3h1V310.0h1V310.6h1V308.6h1V307.8h1V302.8h1V299.7h1V303.1h1V302.2h1V295.4h1V295.2h1V301.0h1V303.3h1V300.9h1V295.0h1V300.9h1V308.4h1V307.5h1V304.7h1V308.7h1V312.8h1V309.0h1V305.0h1V299.8h1V295.6h1V298.0h1V296.3h1V294.1h1V294.3h1V294.6h1V290.3h1V297.1h1V287.7h1V293.8h1V279.6h1V288.6h1V298.4h1V297.4h1V299.9h1V293.6h1V299.1h1V289.7h1V297.9h1V297.4h1V299.3h1V303.8h1V302.2h1V305.5h1V304.0h1V304.6h1V298.2h1V303.5h1V300.6h1V305.3h1V309.1h1V306.6h1V302.2h1V297.7h1V302.4h1V297.6h1V297.8h1V299.3h1V296.1h1V288.7h1V293.8h1V291.9h1V294.9h1V293.0h1V292.6h1V277.8h1V287.1h1V297.6h1V300.6h1V300.3h1V290.2h1V293.8h1V298.1h1V303.4h1V306.1h1V306.9h1V308.1h1V307.2h1V307.9h1V309.4h1V307.8h1V308.5h1V307.4h1V311.2h1V309.7h1V313.4h1V308.2h1V311.5h1V315.9h1V315.8h1V313.0h1V315.3h1V311.1h1V311.8h1V302.8h1V303.3h1V303.0h1V294.6h1V299.4h1V291.5h1V290.1h1V291.6h1V279.1h1V274.9h1V284.0h1V291.2h1V292.2h1V290.1h1V289.8h1V282.8h1V290.1h1V289.1h1V280.4h1V279.3h1V281.7h1V289.8h1V285.3h1V290.7h1V289.9h1V293.9h1V289.1h1V277.7h1V286.7h1V284.5h1V288.1h1V286.1h1V277.0h1V286.5h1V292.2h1V293.0h1V276.7h1V282.7h1V278.7h1V287.8h1V287.3h1V275.1h1V284.7h1V285.3h1V286.6h1V292.7h1V280.9h1V286.3h1V283.7h1V291.9h1V293.1h1V290.6h1V290.8h1V280.0h1V278.4h1V280.2h1V289.1h1V296.0h1V293.8h1V297.7h1V295.8h1V296.0h1V299.2h1V301.9h1V292.1h1V298.6h1V294.1h1V300.2h1V303.4h1V305.7h1V306.7h1V307.3h1V311.2h1V311.6h1V314.9h1V313.0h1V315.3h1V314.9h1V313.7h1V309.4h1V312.1h1V300.7h1V305.4h1V298.5h1V302.5h1V293.1h1V299.1h1V296.2h1V298.9h1V300.0h1V296.4h1V296.8h1V290.8h1V289.9h1V295.9h1V287.8h1V295.1h1V288.7h1V295.9h1V300.5h1V305.4h1V303.2h1V296.4h1V302.0h1V305.5h1V298.8h1V303.9h1V309.1h1V311.4h1V313.0h1V312.0h1V315.9h1V312.6h1V308.8h1V311.5h1V299.1h1V301.4h1V300.5h1V303.2h1V302.6h1V301.8h1V302.2h1V297.2h1V296.6h1V299.5h1V305.1h1V302.9h1V303.8h1V303.2h1V308.0h1V302.5h1V301.8h1V307.1h1V304.4h1V305.4h1V309.2h1V305.3h1V305.1h1V304.4h1V306.6h1V303.6h1V285.4h1V293.2h1V294.5h1V292.5h1V298.8h1V288.8h1V285.4h1V283.1h1V291.4h1V294.3h1V292.5h1V299.0h1V297.5h1V290.6h1V287.7h1V295.0h1V292.5h1V298.7h1V287.8h1V294.2h1V294.0h1V288.1h1V295.4h1V299.7h1V297.1h1V297.9h1V302.5h1V303.3h1V299.9h1V296.4h1V298.6h1V297.4h1V295.6h1V285.9h1V295.7h1V296.8h1V294.2h1V303.3h1V304.1h1V305.9h1V309.7h1V303.7h1V307.9h1V308.8h1V310.3h1V311.4h1V314.0h1V314.8h1V315.1h1V311.3h1V313.9h1V315.3h1V315.9h1V312.4h1V310.5h1V305.0h1V302.0h1V304.6h1V301.3h1V298.8h1V303.9h1V300.1h1V301.0h1V291.4h1V294.6h1V293.6h1V293.6h1V297.8h1V290.5h1V297.3h1V303.4h1V297.1h1V298.8h1V301.1h1V293.5h1V299.7h1V289.0h1V296.1h1V298.4h1V304.3h1V301.9h1V305.9h1V305.7h1V295.6h1V302.6h1V304.1h1V299.6h1V304.6h1V307.7h1V309.3h1V306.5h1V310.1h1V312.9h1V308.7h1V311.9h1V314.4h1V309.8h1V308.1h1V288.9h1V288.6h1V288.4h1V293.8h1V291.1h1V280.5h1V289.3h1V282.1h1V290.6h1V284.8h1V292.8h1V283.0h1V291.3h1V287.0h1V294.3h1V292.0h1V285.7h1V294.4h1V289.6h1V296.0h1V293.8h1V283.9h1V284.6h1V293.6h1V287.2h1V291.5h1V298.4h1V294.6h1V285.9h1V293.6h1V296.9h1V284.2h1V291.0h1V294.3h1V283.9h1V290.9h1V295.4h1V292.3h1V296.9h1V286.3h1V293.9h1V295.9h1V276.6h1V284.6h1V280.1h1V289.0h1V288.0h1V294.1h1V289.1h1V292.5h1V279.0h1V291.0h1V293.3h1V293.6h1V288.4h1V291.6h1V295.5h1V294.7h1V291.4h1V294.9h1V293.3h1V278.5h1V291.8h1V291.7h1V279.7h1V288.7h1V293.5h1V297.0h1V284.2h1V292.3h1V300.6h1V289.7h1V296.7h1V286.5h1V294.1h1V298.1h1V304.0h1V295.0h1V300.9h1V344.8h-1V344.8h-1V350.4h-1V353.3h-1V352.2h-1V355.3h-1V357.6h-1V346.1h-1V352.0h-1V345.6h-1V356.7h-1V354.6h-1V355.0h-1V349.9h-1V370.0h-1V353.6h-1V363.2h-1V358.6h-1V370.8h-1V364.9h-1V357.5h-1V351.8h-1V362.7h-1V356.8h-1V356.9h-1V362.0h-1V352.0h-1V359.5h-1V366.4h-1V357.9h-1V350.3h-1V362.7h-1V359.3h-1V351.0h-1V360.5h-1V359.8h-1V356.3h-1V369.7h-1V361.6h-1V352.1h-1V354.1h-1V364.0h-1V353.7h-1V351.6h-1V350.4h-1V372.0h-1V349.0h-1V348.4h-1V358.4h-1V346.7h-1V360.4h-1V350.8h-1V355.7h-1V351.3h-1V358.8h-1V360.1h-1V365.2h-1V360.9h-1V356.1h-1V355.0h-1V349.1h-1V362.1h-1V351.2h-1V357.2h-1V356.3h-1V356.3h-1V353.1h-1V359.4h-1V365.9h-1V371.4h-1V358.0h-1V349.8h-1V359.7h-1V350.5h-1V363.4h-1V362.0h-1V368.5h-1V363.2h-1V353.8h-1V357.1h-1V342.5h-1V341.1h-1V339.4h-1V337.2h-1V341.4h-1V339.9h-1V339.8h-1V336.9h-1V341.4h-1V343.9h-1V345.0h-1V343.8h-1V345.2h-1V345.7h-1V349.5h-1V341.4h-1V343.6h-1V350.6h-1V347.7h-1V357.2h-1V348.8h-1V348.1h-1V359.2h-1V346.4h-1V345.4h-1V344.9h-1V353.8h-1V347.5h-1V354.4h-1V354.8h-1V350.3h-1V356.7h-1V354.9h-1V348.9h-1V348.2h-1V352.3h-1V350.5h-1V347.4h-1V348.9h-1V353.3h-1V343.9h-1V345.8h-1V337.7h-1V338.2h-1V335.6h-1V333.7h-1V333.1h-1V335.5h-1V337.1h-1V336.6h-1V334.0h-1V334.1h-1V334.7h-1V335.9h-1V336.9h-1V341.7h-1V338.7h-1V341.0h-1V345.3h-1V347.8h-1V354.2h-1V347.5h-1V353.6h-1V352.1h-1V361.7h-1V349.1h-1V351.8h-1V344.5h-1V352.3h-1V348.6h-1V348.8h-1V342.6h-1V344.7h-1V349.4h-1V346.3h-1V353.5h-1V351.1h-1V350.0h-1V371.3h-1V354.1h-1V349.9h-1V349.2h-1V356.3h-1V353.4h-1V351.6h-1V356.2h-1V346.4h-1V348.7h-1V349.9h-1V362.5h-1V359.8h-1V354.3h-1V353.0h-1V356.0h-1V354.8h-1V347.1h-1V353.9h-1V360.0h-1V346.3h-1V345.3h-1V339.5h-1V344.5h-1V340.6h-1V339.2h-1V339.1h-1V342.4h-1V345.4h-1V353.4h-1V341.7h-1V339.7h-1V352.8h-1V340.9h-1V346.0h-1V346.0h-1V347.9h-1V350.9h-1V350.4h-1V345.3h-1V349.9h-1V356.5h-1V344.6h-1V348.0h-1V350.0h-1V344.8h-1V336.7h-1V338.1h-1V337.0h-1V334.0h-1V335.9h-1V335.2h-1V338.0h-1V338.3h-1V346.5h-1V351.2h-1V343.7h-1V344.0h-1V345.4h-1V345.1h-1V346.4h-1V343.7h-1V348.7h-1V355.8h-1V348.9h-1V360.2h-1V346.8h-1V348.6h-1V347.3h-1V349.7h-1V355.6h-1V354.0h-1V349.9h-1V355.8h-1V350.9h-1V352.6h-1V356.3h-1V346.3h-1V352.5h-1V347.2h-1V335.4h-1V337.5h-1V333.8h-1V334.3h-1V332.9h-1V338.0h-1V339.5h-1V337.4h-1V341.6h-1V338.5h-1V338.7h-1V345.7h-1V342.3h-1V355.4h-1V349.3h-1V342.2h-1V352.7h-1V349.5h-1V347.3h-1V350.8h-1V354.6h-1V356.0h-1V357.6h-1V359.8h-1V355.1h-1V352.5h-1V361.9h-1V359.5h-1V352.5h-1V352.4h-1V348.9h-1V350.8h-1V362.6h-1V354.9h-1V358.6h-1V353.3h-1V361.8h-1V363.2h-1V361.2h-1V359.6h-1V361.6h-1V356.8h-1V354.6h-1V357.7h-1V359.4h-1V356.0h-1V353.9h-1V354.3h-1V357.9h-1V364.7h-1V354.7h-1V358.0h-1V363.0h-1V371.4h-1V354.1h-1V352.5h-1V361.7h-1V370.0h-1V365.8h-1V353.7h-1V364.9h-1V366.9h-1V355.0h-1V366.4h-1V354.9h-1V368.4h-1V358.1h-1V353.8h-1V364.4h-1V363.0h-1V352.5h-1V359.4h-1V361.1h-1V357.7h-1V351.8h-1V367.4h-1V347.9h-1V356.5h-1V349.6h-1V343.4h-1V345.6h-1V335.9h-1V334.1h-1V334.5h-1V332.4h-1V333.7h-1V335.0h-1V335.0h-1V338.7h-1V337.3h-1V336.9h-1V340.8h-1V345.8h-1V339.7h-1V338.3h-1V338.9h-1V343.7h-1V341.0h-1V340.3h-1V339.2h-1V345.7h-1V346.8h-1V345.2h-1V350.1h-1V350.0h-1V348.0h-1V347.7h-1V347.5h-1V350.7h-1V359.4h-1V348.7h-1V355.7h-1V353.3h-1V354.1h-1V354.7h-1V362.8h-1V366.3h-1V356.0h-1V347.9h-1V353.8h-1V349.1h-1V348.6h-1V342.6h-1V341.2h-1V340.4h-1V341.5h-1V339.3h-1V345.6h-1V344.7h-1V341.9h-1V346.1h-1V344.8h-1V343.5h-1V347.3h-1V347.4h-1V354.4h-1V344.8h-1V357.8h-1V345.0h-1V352.4h-1V352.9h-1V354.1h-1V351.7h-1V353.8h-1V358.5h-1V359.0h-1V347.4h-1V364.6h-1V355.8h-1V350.6h-1V350.1h-1V351.1h-1V360.7h-1V357.9h-1V355.1h-1V350.1h-1V351.1h-1V339.5h-1V343.4h-1V337.3h-1V344.2h-1V339.8h-1V338.2h-1V344.9h-1V343.8h-1V348.1h-1V351.3h-1V355.1h-1V345.3h-1V344.5h-1V350.4h-1V349.8h-1V347.6h-1V342.6h-1V343.3h-1V337.9h-1V336.9h-1V339.7h-1V337.5h-1V341.6h-1V337.5h-1V342.6h-1V348.9h-1V346.3h-1V355.8h-1V352.3h-1V366.2h-1V359.7h-1V355.0h-1V354.8h-1V352.1h-1V351.9h-1V354.5h-1V353.1h-1V353.0h-1V356.2h-1V352.1h-1V345.9h-1V349.8h-1V342.5h-1V341.3h-1V338.0h-1V333.8h-1V333.1h-1V334.2h-1V335.0h-1V334.0h-1V335.0h-1V334.9h-1V335.8h-1V334.9h-1V335.1h-1V338.7h-1V337.8h-1V337.2h-1V344.4h-1V339.6h-1V345.2h-1V346.4h-1V343.4h-1V351.7h-1V352.3h-1V352.6h-1V345.3h-1V357.7h-1V347.9h-1V352.3h-1V348.2h-1V361.4h-1V364.0h-1V357.1h-1V356.0h-1V360.7h-1V356.6h-1V362.1h-1V354.1h-1V352.4h-1V354.5h-1V346.4h-1V346.5h-1V348.3h-1V345.8h-1V349.9h-1V347.4h-1V348.8h-1V346.4h-1V353.9h-1V362.9h-1V351.3h-1V345.6h-1V349.3h-1V353.7h-1V352.2h-1V350.0h-1V363.7h-1V353.5h-1V351.9h-1V345.8h-1V359.2h-1V344.8h-1V351.4h-1V355.2h-1V347.5h-1V363.4h-1V352.4h-1V352.9h-1V353.6h-1V369.4h-1V376.7h-1V359.8h-1V353.9h-1V351.9h-1V345.1h-1V347.4h-1V347.6h-1V351.4h-1V340.0h-1V343.2h-1V343.4h-1V357.9h-1V349.4h-1V353.0h-1V353.1h-1V352.5h-1V348.3h-1V347.0h-1V344.4h-1V353.3h-1V354.4h-1V353.6h-1V359.5h-1V350.4h-1V361.0h-1V347.6h-1V348.4h-1V350.3h-1V350.8h-1V343.5h-1V341.0h-1V341.0h-1V352.1h-1V343.1h-1V342.5h-1V343.7h-1V342.0h-1V344.2h-1V359.7h-1V348.1h-1V348.5h-1V355.6h-1V352.9h-1V354.5h-1V352.1h-1V356.0h-1V352.9h-1V357.4h-1V344.3h-1V347.3h-1V345.0h-1V346.8h-1V340.1h-1V344.1h-1V341.5h-1V342.7h-1V341.7h-1V338.9h-1V339.3h-1V336.1h-1V336.8h-1V339.1h-1V340.2h-1V339.6h-1V341.5h-1V344.8h-1V342.9h-1V339.1h-1V339.0h-1V344.2h-1V340.6h-1V344.8h-1V342.6h-1V344.4h-1V343.5h-1V343.0h-1V348.4h-1V345.2h-1V348.1h-1V347.0Z" fill="#3232c8"/><path d="M147 311.6V311.6h1V312.2h1V312.1h1V313.0h1V313.0h1V313.4h1V314.0h1V314.4h1V314.5h1V315.0h1V314.5h1V314.5h1V314.5h1V314.6h1V314.8h1V315.0h1V315.2h1V315.2h1V315.5h1V315.3h1V315.5h1V315.6h1V315.8h1V315.0h1V315.0h1V314.7h1V314.6h1V314.4h1V314.2h1V314.0h1V313.9h1V313.7h1V312.9h1V312.7h1V312.4h1V312.5h1V312.5h1V312.2h1V312.4h1V312.6h1V312.3h1V312.4h1V312.8h1V313.2h1V313.1h1V313.3h1V313.4h1V313.5h1V314.0h1V314.4h1V314.8h1V313.7h1V313.5h1V313.0h1V312.2h1V311.9h1V311.7h1V311.1h1V311.1h1V311.6h1V311.5h1V311.9h1V311.8h1V312.0h1V311.4h1V311.3h1V311.6h1V312.0h1V312.5h1V312.9h1V313.4h1V313.5h1V313.7h1V313.7h1V313.2h1V312.8h1V312.0h1V311.5h1V310.9h1V310.3h1V309.7h1V309.7h1V309.5h1V309.4h1V309.9h1V310.8h1V311.1h1V311.6h1V312.2h1V312.1h1V312.6h1V312.6h1V312.1h1V312.1h1V311.9h1V311.9h1V311.8h1V312.2h1V312.3h1V312.0h1V312.2h1V312.1h1V311.8h1V312.0h1V312.2h1V312.5h1V312.7h1V313.0h1V312.7h1V312.5h1V312.1h1V312.0h1V311.9h1V311.5h1V310.6h1V310.3h1V309.6h1V309.7h1V309.7h1V310.0h1V310.7h1V310.9h1V310.9h1V311.1h1V311.6h1V311.7h1V311.9h1V311.8h1V312.7h1V312.7h1V312.9h1V313.5h1V313.7h1V314.2h1V314.7h1V315.0h1V315.3h1V315.6h1V315.9h1V315.8h1V316.0h1V316.1h1V316.2h1V316.4h1V316.6h1V316.6h1V316.2h1V315.7h1V315.4h1V314.7h1V314.1h1V313.5h1V312.0h1V311.8h1V311.8h1V311.7h1V311.1h1V311.3h1V311.7h1V311.9h1V310.6h1V310.4h1V310.4h1V310.9h1V311.4h1V312.2h1V313.2h1V313.9h1V314.5h1V314.8h1V315.3h1V315.0h1V314.9h1V314.3h1V313.6h1V313.4h1V313.2h1V312.7h1V312.9h1V312.7h1V312.0h1V312.3h1V312.6h1V312.9h1V313.6h1V314.3h1V314.6h1V314.7h1V315.1h1V315.3h1V315.0h1V314.1h1V313.0h1V312.1h1V311.5h1V311.2h1V311.6h1V311.0h1V311.6h1V311.0h1V310.6h1V311.0h1V311.2h1V310.2h1V309.8h1V310.4h1V311.2h1V311.5h1V312.0h1V312.2h1V311.4h1V312.0h1V312.1h1V312.1h1V312.5h1V312.8h1V313.2h1V313.3h1V313.6h1V313.5h1V313.7h1V314.0h1V314.4h1V314.8h1V314.5h1V314.5h1V313.8h1V313.4h1V312.6h1V312.1h1V311.5h1V311.1h1V310.7h1V310.6h1V310.5h1V310.8h1V311.2h1V311.1h1V310.4h1V310.6h1V310.9h1V311.5h1V312.0h1V312.1h1V312.1h1V312.6h1V313.2h1V313.4h1V313.7h1V313.8h1V314.2h1V314.4h1V314.7h1V314.5h1V314.7h1V314.5h1V314.8h1V315.0h1V315.3h1V315.2h1V315.6h1V316.1h1V316.3h1V316.5h1V316.6h1V316.4h1V316.1h1V315.4h1V314.0h1V313.4h1V312.5h1V312.2h1V311.5h1V310.9h1V311.0h1V310.3h1V309.1h1V309.6h1V309.6h1V309.8h1V310.1h1V310.0h1V310.2h1V310.3h1V310.3h1V310.3h1V309.9h1V309.8h1V309.7h1V309.4h1V309.6h1V310.0h1V310.2h1V310.0h1V309.0h1V308.7h1V308.7h1V309.0h1V309.3h1V308.9h1V310.0h1V309.9h1V310.5h1V309.4h1V309.9h1V309.9h1V310.7h1V310.6h1V309.7h1V309.7h1V309.3h1V309.3h1V309.8h1V310.1h1V309.7h1V309.6h1V310.2h1V310.8h1V310.1h1V310.3h1V309.2h1V309.1h1V309.1h1V309.5h1V310.5h1V310.6h1V310.9h1V311.0h1V310.9h1V311.7h1V312.0h1V311.7h1V312.5h1V312.5h1V312.6h1V312.9h1V313.7h1V314.1h1V314.3h1V315.1h1V315.4h1V315.7h1V316.1h1V316.5h1V316.6h1V316.3h1V315.9h1V315.8h1V314.9h1V314.4h1V313.6h1V313.2h1V312.8h1V312.4h1V312.1h1V311.6h1V311.7h1V311.4h1V311.0h1V311.4h1V311.1h1V311.2h1V310.9h1V311.7h1V311.7h1V311.6h1V312.6h1V313.1h1V313.1h1V312.8h1V313.1h1V313.6h1V313.8h1V314.2h1V314.4h1V314.8h1V315.4h1V315.7h1V316.0h1V315.7h1V315.3h1V315.1h1V314.1h1V313.3h1V312.9h1V312.6h1V312.5h1V312.7h1V312.7h1V312.6h1V312.7h1V312.5h1V312.8h1V312.8h1V313.2h1V313.6h1V313.7h1V314.0h1V313.9h1V314.0h1V314.4h1V314.7h1V315.2h1V315.1h1V314.6h1V314.3h1V313.8h1V313.7h1V312.4h1V311.8h1V312.0h1V311.5h1V311.3h1V311.3h1V311.2h1V311.1h1V311.0h1V310.8h1V310.6h1V311.3h1V311.5h1V312.0h1V311.8h1V311.5h1V311.5h1V311.8h1V311.5h1V310.9h1V311.3h1V311.5h1V312.0h1V311.8h1V312.2h1V312.3h1V312.9h1V313.0h1V312.8h1V312.6h1V312.4h1V312.4h1V312.1h1V310.7h1V310.4h1V311.1h1V311.1h1V312.3h1V312.7h1V313.3h1V314.2h1V314.5h1V314.7h1V315.1h1V315.5h1V315.8h1V316.1h1V316.1h1V316.4h1V316.2h1V316.4h1V316.4h1V316.4h1V316.1h1V315.6h1V315.4h1V314.9h1V314.3h1V313.5h1V313.2h1V312.9h1V312.4h1V312.4h1V311.7h1V311.4h1V311.2h1V311.4h1V312.1h1V311.9h1V311.6h1V312.0h1V311.9h1V312.0h1V311.9h1V312.0h1V312.0h1V312.0h1V312.4h1V312.5h1V312.7h1V312.6h1V313.2h1V313.7h1V313.2h1V313.1h1V313.6h1V313.9h1V314.3h1V314.5h1V314.6h1V315.0h1V315.2h1V315.5h1V315.6h1V315.8h1V316.0h1V315.4h1V314.7h1V312.9h1V311.8h1V310.7h1V310.0h1V309.8h1V310.2h1V310.2h1V310.3h1V310.7h1V310.8h1V310.5h1V310.7h1V311.1h1V311.3h1V310.9h1V311.0h1V310.6h1V310.2h1V309.9h1V310.1h1V310.6h1V310.7h1V309.8h1V310.3h1V310.6h1V310.7h1V310.8h1V311.2h1V310.6h1V311.2h1V311.6h1V311.1h1V311.3h1V311.3h1V310.9h1V311.1h1V311.1h1V310.7h1V310.8h1V311.1h1V311.1h1V311.0h1V309.3h1V309.1h1V309.5h1V309.9h1V310.1h1V309.9h1V309.6h1V310.3h1V309.5h1V309.2h1V309.0h1V310.0h1V310.2h1V309.8h1V309.8h1V310.2h1V310.4h1V310.6h1V311.2h1V309.8h1V310.3h1V309.6h1V310.0h1V310.0h1V310.2h1V311.2h1V310.6h1V310.9h1V311.6h1V311.5h1V311.9h1V311.4h1V311.5h1V312.1h1V312.6h1V312.8h1V312.7h1V334.3h-1V334.3h-1V334.2h-1V334.4h-1V334.9h-1V335.5h-1V335.6h-1V335.1h-1V335.5h-1V335.4h-1V336.1h-1V336.4h-1V335.8h-1V336.8h-1V337.0h-1V337.0h-1V337.4h-1V336.7h-1V337.2h-1V335.8h-1V336.4h-1V336.6h-1V336.8h-1V337.2h-1V337.2h-1V336.8h-1V337.0h-1V338.0h-1V337.8h-1V337.5h-1V336.7h-1V337.4h-1V337.1h-1V336.9h-1V337.1h-1V337.5h-1V337.9h-1V337.7h-1V336.0h-1V335.9h-1V335.9h-1V336.2h-1V336.3h-1V335.9h-1V335.9h-1V336.1h-1V335.7h-1V335.7h-1V335.9h-1V335.4h-1V335.8h-1V336.4h-1V335.8h-1V336.2h-1V336.3h-1V336.4h-1V336.7h-1V337.2h-1V336.3h-1V336.4h-1V336.9h-1V337.1h-1V336.8h-1V336.4h-1V336.0h-1V336.1h-1V335.7h-1V335.9h-1V336.3h-1V336.5h-1V336.2h-1V336.3h-1V336.7h-1V336.8h-1V336.8h-1V337.2h-1V337.0h-1V336.3h-1V335.2h-1V334.1h-1V332.3h-1V331.6h-1V331.0h-1V331.2h-1V331.4h-1V331.5h-1V331.8h-1V332.0h-1V332.4h-1V332.5h-1V332.7h-1V333.1h-1V333.4h-1V333.9h-1V333.8h-1V333.3h-1V333.8h-1V334.4h-1V334.3h-1V334.5h-1V334.6h-1V335.0h-1V335.0h-1V335.0h-1V335.1h-1V335.0h-1V335.1h-1V335.0h-1V335.4h-1V335.1h-1V334.9h-1V335.6h-1V335.8h-1V335.6h-1V335.3h-1V334.6h-1V334.6h-1V334.1h-1V333.8h-1V333.5h-1V332.7h-1V332.1h-1V331.6h-1V331.4h-1V330.9h-1V330.6h-1V330.6h-1V330.6h-1V330.8h-1V330.6h-1V330.9h-1V330.9h-1V331.2h-1V331.5h-1V331.9h-1V332.3h-1V332.5h-1V332.8h-1V333.7h-1V334.3h-1V334.7h-1V335.9h-1V335.9h-1V336.6h-1V336.3h-1V334.9h-1V334.6h-1V334.6h-1V334.4h-1V334.2h-1V334.0h-1V334.1h-1V334.7h-1V334.8h-1V335.2h-1V335.0h-1V335.5h-1V335.7h-1V336.1h-1V335.5h-1V335.2h-1V335.5h-1V335.5h-1V335.2h-1V335.0h-1V335.5h-1V335.7h-1V336.4h-1V336.2h-1V336.0h-1V335.9h-1V335.8h-1V335.7h-1V335.7h-1V335.5h-1V335.0h-1V335.2h-1V334.6h-1V333.3h-1V333.2h-1V332.7h-1V332.4h-1V331.9h-1V331.8h-1V332.3h-1V332.6h-1V333.0h-1V333.1h-1V333.0h-1V333.3h-1V333.4h-1V333.8h-1V334.2h-1V334.2h-1V334.5h-1V334.3h-1V334.4h-1V334.3h-1V334.3h-1V334.5h-1V334.4h-1V334.1h-1V333.7h-1V332.9h-1V331.9h-1V331.7h-1V331.3h-1V331.0h-1V331.3h-1V331.6h-1V332.2h-1V332.6h-1V332.8h-1V333.2h-1V333.4h-1V333.9h-1V334.2h-1V333.9h-1V333.9h-1V334.4h-1V335.4h-1V335.3h-1V335.3h-1V336.1h-1V335.8h-1V335.9h-1V335.6h-1V336.0h-1V335.6h-1V335.3h-1V335.4h-1V334.9h-1V334.6h-1V334.2h-1V333.8h-1V333.4h-1V332.6h-1V332.1h-1V331.2h-1V331.1h-1V330.7h-1V330.4h-1V330.5h-1V330.9h-1V331.3h-1V331.6h-1V331.9h-1V332.7h-1V332.9h-1V333.3h-1V334.1h-1V334.4h-1V334.5h-1V334.5h-1V335.3h-1V335.0h-1V335.3h-1V336.1h-1V336.0h-1V336.1h-1V336.4h-1V336.5h-1V337.5h-1V337.9h-1V337.9h-1V337.8h-1V336.7h-1V336.9h-1V336.2h-1V336.8h-1V337.4h-1V337.3h-1V336.9h-1V337.2h-1V337.7h-1V337.7h-1V337.3h-1V337.3h-1V336.4h-1V336.3h-1V337.1h-1V337.1h-1V337.6h-1V336.5h-1V337.1h-1V337.0h-1V338.1h-1V337.7h-1V338.0h-1V338.3h-1V338.3h-1V338.0h-1V337.0h-1V336.8h-1V337.0h-1V337.4h-1V337.6h-1V337.3h-1V337.2h-1V337.1h-1V336.7h-1V336.7h-1V336.7h-1V336.8h-1V337.0h-1V336.9h-1V337.2h-1V337.4h-1V337.4h-1V337.9h-1V336.7h-1V336.0h-1V336.1h-1V335.5h-1V334.8h-1V334.5h-1V333.6h-1V333.0h-1V331.6h-1V330.9h-1V330.6h-1V330.4h-1V330.5h-1V330.7h-1V330.9h-1V331.4h-1V331.8h-1V331.7h-1V332.0h-1V332.2h-1V332.5h-1V332.3h-1V332.5h-1V332.3h-1V332.6h-1V332.8h-1V333.2h-1V333.3h-1V333.6h-1V333.8h-1V334.4h-1V334.9h-1V334.9h-1V335.0h-1V335.5h-1V336.1h-1V336.4h-1V336.6h-1V335.9h-1V335.8h-1V336.2h-1V336.5h-1V336.4h-1V336.3h-1V335.9h-1V335.5h-1V334.9h-1V334.4h-1V333.6h-1V333.2h-1V332.5h-1V332.5h-1V332.2h-1V332.6h-1V333.0h-1V333.3h-1V333.5h-1V333.4h-1V333.7h-1V333.8h-1V334.2h-1V334.5h-1V334.9h-1V334.9h-1V335.0h-1V335.6h-1V334.8h-1V335.0h-1V335.5h-1V335.8h-1V336.6h-1V337.2h-1V336.8h-1V335.8h-1V336.0h-1V336.4h-1V336.0h-1V335.4h-1V336.0h-1V335.4h-1V335.8h-1V335.5h-1V334.9h-1V334.0h-1V332.9h-1V332.0h-1V331.7h-1V331.9h-1V332.3h-1V332.4h-1V332.7h-1V333.4h-1V334.1h-1V334.4h-1V334.7h-1V335.0h-1V334.3h-1V334.1h-1V334.3h-1V333.8h-1V333.6h-1V333.4h-1V332.7h-1V332.1h-1V332.0h-1V331.7h-1V332.2h-1V332.5h-1V333.1h-1V333.8h-1V334.8h-1V335.6h-1V336.1h-1V336.6h-1V336.6h-1V336.4h-1V335.1h-1V335.3h-1V335.7h-1V335.9h-1V335.3h-1V335.2h-1V335.2h-1V335.0h-1V333.5h-1V332.9h-1V332.3h-1V331.6h-1V331.3h-1V330.8h-1V330.4h-1V330.4h-1V330.6h-1V330.8h-1V330.9h-1V331.0h-1V331.2h-1V331.1h-1V331.4h-1V331.7h-1V332.0h-1V332.3h-1V332.8h-1V333.3h-1V333.5h-1V334.1h-1V334.3h-1V334.3h-1V335.2h-1V335.1h-1V335.3h-1V335.4h-1V335.9h-1V336.1h-1V336.1h-1V336.3h-1V337.0h-1V337.3h-1V337.3h-1V337.4h-1V336.7h-1V336.4h-1V335.5h-1V335.1h-1V335.0h-1V334.9h-1V334.5h-1V334.3h-1V334.0h-1V334.3h-1V334.5h-1V334.8h-1V335.0h-1V335.2h-1V334.9h-1V334.8h-1V335.0h-1V334.7h-1V334.8h-1V335.2h-1V335.1h-1V335.1h-1V334.9h-1V334.9h-1V334.4h-1V334.4h-1V334.9h-1V334.8h-1V335.4h-1V335.9h-1V336.2h-1V337.1h-1V337.6h-1V337.5h-1V337.3h-1V337.3h-1V336.7h-1V336.1h-1V335.5h-1V335.0h-1V334.2h-1V333.8h-1V333.3h-1V333.3h-1V333.5h-1V333.6h-1V334.1h-1V334.5h-1V335.0h-1V335.4h-1V335.7h-1V335.6h-1V335.0h-1V335.2h-1V335.1h-1V335.5h-1V335.4h-1V335.9h-1V335.9h-1V335.3h-1V335.1h-1V334.8h-1V334.0h-1V333.5h-1V333.3h-1V332.2h-1V332.6h-1V333.0h-1V333.5h-1V333.6h-1V333.7h-1V333.9h-1V333.8h-1V334.2h-1V334.6h-1V334.7h-1V334.4h-1V334.6h-1V334.8h-1V334.5h-1V334.5h-1V334.6h-1V334.3h-1V334.1h-1V333.3h-1V333.1h-1V333.0h-1V332.8h-1V332.6h-1V332.4h-1V332.3h-1V332.0h-1V332.0h-1V331.2h-1V331.4h-1V331.5h-1V331.7h-1V331.5h-1V331.8h-1V331.8h-1V332.0h-1V332.2h-1V332.4h-1V332.5h-1V332.5h-1V332.5h-1V332.0h-1V332.5h-1V332.6h-1V333.0h-1V333.6h-1V334.0h-1V334.0h-1V334.9h-1V334.8h-1V335.4Z" fill="#6464dc"/>
<path d="M700 432.9V432.9h1V439.1h1V437.5h1V444.9h1V441.1h1V444.7h1V449.9h1V448.7h1V452.1h1V443.8h1V449.9h1V451.1h1V437.8h1V435.7h1V441.9h1V441.6h1V446.9h1V448.5h1V445.3h1V443.0h1V449.3h1V446.9h1V451.3h1V450.5h1V452.3h1V455.5h1V454.5h1V456.8h1V443.9h1V450.0h1V456.4h1V454.4h1V493.9h-1V493.9h-1V496.9h-1V495.2h-1V499.9h-1V490.7h-1V496.5h-1V496.4h-1V496.0h-1V499.1h-1V498.7h-1V501.8h-1V501.0h-1V500.6h-1V497.9h-1V508.0h-1V500.1h-1V509.2h-1V512.4h-1V506.5h-1V510.5h-1V497.6h-1V499.2h-1V497.6h-1V496.9h-1V500.4h-1V499.2h-1V506.2h-1V497.1h-1V515.5h-1V504.3h-1V511.8h-1V506.9Z" fill="#3232c8"/><path d="M700 460.6V460.6h1V460.3h1V461.0h1V460.8h1V461.8h1V461.7h1V461.8h1V462.0h1V462.6h1V462.7h1V463.1h1V462.8h1V462.0h1V461.6h1V461.6h1V461.9h1V461.8h1V461.8h1V461.7h1V462.2h1V462.7h1V462.5h1V463.0h1V463.0h1V463.3h1V463.8h1V464.3h1V464.4h1V463.9h1V463.9h1V463.9h1V464.0h1V483.0h-1V483.0h-1V483.1h-1V483.1h-1V483.1h-1V482.6h-1V482.7h-1V483.2h-1V483.7h-1V484.0h-1V484.0h-1V484.5h-1V484.3h-1V484.8h-1V485.3h-1V485.2h-1V485.2h-1V485.1h-1V485.4h-1V485.4h-1V485.0h-1V484.2h-1V483.9h-1V484.3h-1V484.4h-1V485.0h-1V485.2h-1V485.3h-1V485.2h-1V486.2h-1V486.0h-1V486.7h-1V486.4Z" fill="#6464dc"/>
<path d="M732 324.500 H764 M732 474.500 H764" stroke="#3232c8"/>
<path d="M338.500 253 V396" stroke="#1c6c1c"/>
<path d="M967.500 297 V349 M967.500 448 V495" stroke="#2020c0"/>
</svg>
<!-- ===== Frekans Çözümlemesi dialog ===== -->
<div class="a" style="left:32px;top:346px;width:685px;height:515px;border-radius:8px 8px 2px 2px;background:#dcdcdc;border:1px solid #175c94;box-shadow:3px 4px 8px rgba(0,0,0,.55),0 0 4px rgba(0,0,0,.35)"></div>
<div class="a" style="left:33px;top:347px;width:683px;height:513px;border-radius:7px 7px 1px 1px;border:1px solid #46b4f6;border-top:0"></div>
<div class="a" style="left:34px;top:369px;width:681px;height:490px;border:1px solid #1b6ca2;border-top:0"></div>
<div class="a" style="left:33px;top:347px;width:683px;height:22px;border-radius:7px 7px 0 0;background:linear-gradient(#1a7fcc 0,#1b96e6 15%,#22aef6 50%,#1cacf4 75%,#17a2ec 100%);border-top:1px solid #4aaeea"></div>
<div class="t lib" style="left:34px;top:350.500px;width:655px;text-align:center;font-size:14.500px;font-weight:bold;color:#fff;text-shadow:0 1px 1px rgba(0,60,120,.6)">Frekans Çözümlemesi</div>
<svg class="a" style="left:36px;top:349px" width="19" height="18" viewBox="0 0 18 17"><path d="M2.800 10 C2.500 3.500 6 1.200 9 1.200 C12 1.200 15.500 3.500 15.200 10" fill="none" stroke="#1c2ca4" stroke-width="1.600"/><ellipse cx="9" cy="10.800" rx="4.600" ry="4.800" fill="#f8c81c"/><path d="M5 11 l1.200 -2.500 1 3.500 1.200 -6 1.200 7 1.100 -5 1 3.500 1.100 -1.500" fill="none" stroke="#ea3a12" stroke-width="1.500"/><ellipse cx="2.900" cy="11" rx="2.400" ry="3.800" fill="#1c2ca4"/><ellipse cx="15.100" cy="11" rx="2.400" ry="3.800" fill="#1c2ca4"/><ellipse cx="3.600" cy="11" rx="1.100" ry="2.600" fill="#3a52d8"/><ellipse cx="14.400" cy="11" rx="1.100" ry="2.600" fill="#3a52d8"/></svg>
<div class="a" style="left:672px;top:351px;width:19px;height:14px;border-radius:3px;background:linear-gradient(#3a7cb0,#1c5c8c 50%,#1a5484);border:1px solid #1c5078"></div>
<div class="a" style="left:677px;top:354px;width:8px;height:7px;border:1px solid #fff;border-top-width:2px"></div>
<div class="a" style="left:692px;top:351px;width:20px;height:14px;border-radius:3px;background:linear-gradient(#c84040,#a81c1c 50%,#a01818);border:1px solid #8a1c1c"></div>
<svg class="a" style="left:697.500px;top:354px" width="9" height="8" viewBox="0 0 9 8"><path d="M1 .5 L8 7.500 M8 .5 L1 7.500" stroke="#fff" stroke-width="2"/></svg>
<div class="a" style="left:86px;top:374px;width:623px;height:330px;background:#fff;border:1px solid #000"></div>
<svg class="a" style="left:0;top:375px" width="983" height="330" viewBox="0 375 983 330"><g shape-rendering="crispEdges"><path d="M87 703V377.0h1V377.0h1V377.0h1V377.0h1V377.0h1V377.0h1V377.0h1V377.0h1V377.0h1V377.0h1V377.0h1V377.0h1V377.0h1V377.0h1V377.5h1V378.0h1V378.1h1V378.2h1V378.2h1V378.3h1V378.4h1V378.4h1V378.5h1V378.6h1V378.6h1V378.7h1V378.8h1V378.8h1V378.9h1V379.0h1V379.0h1V379.1h1V379.2h1V379.2h1V379.3h1V379.4h1V379.4h1V379.5h1V379.6h1V379.6h1V379.7h1V379.8h1V379.9h1V380.0h1V380.1h1V380.2h1V380.3h1V380.4h1V380.5h1V380.6h1V380.7h1V380.8h1V380.9h1V381.0h1V381.1h1V381.2h1V381.3h1V381.4h1V381.5h1V381.6h1V381.7h1V381.8h1V381.9h1V382.0h1V382.1h1V382.2h1V382.3h1V382.4h1V382.5h1V382.6h1V382.7h1V382.7h1V382.8h1V382.9h1V383.0h1V383.1h1V383.2h1V383.3h1V383.3h1V383.4h1V383.5h1V383.6h1V383.7h1V383.8h1V383.9h1V384.0h1V384.1h1V384.3h1V384.5h1V384.7h1V384.9h1V385.0h1V385.2h1V385.4h1V385.6h1V385.8h1V386.0h1V386.2h1V386.4h1V386.6h1V386.8h1V387.0h1V387.1h1V387.3h1V387.5h1V387.7h1V387.9h1V388.1h1V388.4h1V388.6h1V388.9h1V389.1h1V389.4h1V389.6h1V389.9h1V390.1h1V390.4h1V390.6h1V390.9h1V391.1h1V391.4h1V391.6h1V391.9h1V392.3h1V392.9h1V393.4h1V394.0h1V394.6h1V395.1h1V395.7h1V396.3h1V396.9h1V397.5h1V398.1h1V398.8h1V399.4h1V400.0h1V400.6h1V401.2h1V401.8h1V402.4h1V403.0h1V403.7h1V404.3h1V404.9h1V405.5h1V406.1h1V406.7h1V407.2h1V407.8h1V408.4h1V409.0h1V409.5h1V410.1h1V410.7h1V411.3h1V411.8h1V412.4h1V413.0h1V413.6h1V414.1h1V414.7h1V415.3h1V415.8h1V416.3h1V416.8h1V417.4h1V417.9h1V418.4h1V418.9h1V419.4h1V420.0h1V420.5h1V421.0h1V421.5h1V422.1h1V422.6h1V423.1h1V423.6h1V424.2h1V424.7h1V425.2h1V425.7h1V426.2h1V426.8h1V427.3h1V427.8h1V428.3h1V428.9h1V429.4h1V429.9h1V430.5h1V431.0h1V431.5h1V432.1h1V432.6h1V433.1h1V433.7h1V434.2h1V434.8h1V435.3h1V435.8h1V436.4h1V436.9h1V437.4h1V438.0h1V438.5h1V439.0h1V439.6h1V440.2h1V440.9h1V441.5h1V442.1h1V442.7h1V443.3h1V443.9h1V444.6h1V445.2h1V446.2h1V447.6h1V449.0h1V450.4h1V451.8h1V453.2h1V454.6h1V456.0h1V457.4h1V458.7h1V460.1h1V461.5h1V462.9h1V464.3h1V465.6h1V467.0h1V468.3h1V469.5h1V470.7h1V471.9h1V473.2h1V474.4h1V475.6h1V476.8h1V477.6h1V478.0h1V478.4h1V478.8h1V478.9h1V478.8h1V478.6h1V478.5h1V478.1h1V477.6h1V477.1h1V476.6h1V476.1h1V475.6h1V475.1h1V474.9h1V475.2h1V475.6h1V475.9h1V476.3h1V477.0h1V477.7h1V478.3h1V479.0h1V480.0h1V481.0h1V482.0h1V483.0h1V484.0h1V485.0h1V486.0h1V486.8h1V487.4h1V488.0h1V488.6h1V489.2h1V489.8h1V490.4h1V490.1h1V489.8h1V489.4h1V489.1h1V488.8h1V488.5h1V488.2h1V487.8h1V487.7h1V487.5h1V487.3h1V487.2h1V487.0h1V486.9h1V486.7h1V486.5h1V485.4h1V484.0h1V482.6h1V481.3h1V479.9h1V478.5h1V477.1h1V475.7h1V474.4h1V473.0h1V471.6h1V470.2h1V468.8h1V468.3h1V468.6h1V468.4h1V469.0h1V469.6h1V469.6h1V470.2h1V470.4h1V468.9h1V468.1h1V468.4h1V467.3h1V467.3h1V466.4h1V466.3h1V467.5h1V469.8h1V471.8h1V473.1h1V475.5h1V477.7h1V479.2h1V482.3h1V484.4h1V486.3h1V488.2h1V490.8h1V491.8h1V493.6h1V495.3h1V496.6h1V498.4h1V499.3h1V501.3h1V499.6h1V499.0h1V497.8h1V495.7h1V494.5h1V493.4h1V493.1h1V491.2h1V490.2h1V488.5h1V487.5h1V486.2h1V485.5h1V487.6h1V489.4h1V491.6h1V493.0h1V494.7h1V496.1h1V497.7h1V498.8h1V497.8h1V496.9h1V495.4h1V493.9h1V492.3h1V491.3h1V489.5h1V489.9h1V489.6h1V489.2h1V489.0h1V489.9h1V490.1h1V489.0h1V491.9h1V494.0h1V496.3h1V499.0h1V502.0h1V504.6h1V506.1h1V509.2h1V505.0h1V500.8h1V497.0h1V496.1h1V494.6h1V492.5h1V492.3h1V490.8h1V489.8h1V489.8h1V488.4h1V487.4h1V486.1h1V484.9h1V482.5h1V480.3h1V479.2h1V478.5h1V481.4h1V483.5h1V485.6h1V488.4h1V491.2h1V493.1h1V494.0h1V495.0h1V496.1h1V497.5h1V496.9h1V495.5h1V495.2h1V493.1h1V492.9h1V494.7h1V493.4h1V495.4h1V495.6h1V498.2h1V499.6h1V498.8h1V500.9h1V500.0h1V497.2h1V497.9h1V497.0h1V497.8h1V497.0h1V498.4h1V499.2h1V497.7h1V498.4h1V500.9h1V502.1h1V499.2h1V499.0h1V498.7h1V497.5h1V497.8h1V497.8h1V498.5h1V500.7h1V501.2h1V502.9h1V505.4h1V504.4h1V507.3h1V508.8h1V508.4h1V508.9h1V511.5h1V510.6h1V511.2h1V512.7h1V514.3h1V513.3h1V515.9h1V518.3h1V521.9h1V522.4h1V525.3h1V522.9h1V521.1h1V519.6h1V518.5h1V515.9h1V514.0h1V512.4h1V512.6h1V510.9h1V512.0h1V511.4h1V508.8h1V508.5h1V509.5h1V508.4h1V509.6h1V509.6h1V510.2h1V511.9h1V514.4h1V513.8h1V515.0h1V516.3h1V517.0h1V517.3h1V519.3h1V516.0h1V513.5h1V515.2h1V514.7h1V514.7h1V513.1h1V515.4h1V516.1h1V514.8h1V516.8h1V517.3h1V516.9h1V517.6h1V519.1h1V521.4h1V523.3h1V525.1h1V529.0h1V530.0h1V532.8h1V531.8h1V536.4h1V536.5h1V538.7h1V539.6h1V540.7h1V540.3h1V538.9h1V543.9h1V542.3h1V544.3h1V547.5h1V548.1h1V548.8h1V552.8h1V552.4h1V552.4h1V553.2h1V557.5h1V556.8h1V559.6h1V558.7h1V559.1h1V562.0h1V564.4h1V562.2h1V566.3h1V568.0h1V568.4h1V569.5h1V566.3h1V570.1h1V572.0h1V568.7h1V570.5h1V571.3h1V573.3h1V573.2h1V573.5h1V575.1h1V571.4h1V571.7h1V572.1h1V572.0h1V571.6h1V576.0h1V575.3h1V571.5h1V574.0h1V573.5h1V573.9h1V574.5h1V576.3h1V576.4h1V575.7h1V575.3h1V577.0h1V577.6h1V581.4h1V583.8h1V583.5h1V583.4h1V585.2h1V587.2h1V589.1h1V590.7h1V589.3h1V592.0h1V594.6h1V602.9h1V609.0h1V614.5h1V620.6h1V625.7h1V639.4h1V652.4h1V667.6h1V694.0h1V703Z" fill="#8c3cbe"/><path d="M678 703V680h1V703ZM679 703V690h1V703ZM681 703V671h1V703ZM683 703V688h1V703ZM684 703V680h1V703ZM685 703V695h1V703ZM687 703V670h1V703Z" fill="#8c3cbe"/><path d="M94.5 375V703M171.5 375V703M217.5 375V703M249.5 375V703M274.5 375V703M294.5 375V703M312.5 375V703M327.5 375V703M340.5 375V703M352.5 375V703M429.5 375V703M475.5 375V703M507.5 375V703M532.5 375V703M552.5 375V703M570.5 375V703M585.5 375V703M598.5 375V703M687.5 375V703M87 378.5H708M87 403.5H708M87 428.5H708M87 453.5H708M87 478.5H708M87 503.5H708M87 527.5H708M87 552.5H708M87 577.5H708M87 602.5H708M87 627.5H708M87 652.5H708M87 677.5H708" stroke="#a0a0a0" fill="none"/></g></svg>
<svg class="a" style="left:34px;top:375px" width="56" height="335" viewBox="34 375 56 335"><g font-family="DejaVu Sans,Liberation Sans,sans-serif" font-size="11.800" text-anchor="end" fill="#000"><text x="83" y="386.6">-12dB</text><text x="83" y="407.9">-18dB</text><text x="83" y="432.8" font-weight="bold">-24dB</text><text x="83" y="457.6">-30dB</text><text x="83" y="482.5">-36dB</text><text x="83" y="507.4">-42dB</text><text x="83" y="532.3" font-weight="bold">-48dB</text><text x="83" y="557.2">-54dB</text><text x="83" y="582.0">-60dB</text><text x="83" y="606.9">-66dB</text><text x="83" y="631.8" font-weight="bold">-72dB</text><text x="83" y="656.7">-78dB</text><text x="83" y="681.6">-84dB</text><text x="83" y="698.5">-90dB</text></g><g stroke="#000"><path d="M83 378.5h3"/><path d="M83 403.5h3"/><path d="M83 428.5h3"/><path d="M83 453.5h3"/><path d="M83 478.5h3"/><path d="M83 503.5h3"/><path d="M83 527.5h3"/><path d="M83 552.5h3"/><path d="M83 577.5h3"/><path d="M83 602.5h3"/><path d="M83 627.5h3"/><path d="M83 652.5h3"/><path d="M83 677.5h3"/><path d="M83 702.5h3"/></g></svg>
<svg class="a" style="left:34px;top:703px" width="682" height="24" viewBox="34 703 682 24"><g font-family="DejaVu Sans,Liberation Sans,sans-serif" font-size="11.500" fill="#000"><text x="87.5" y="720" text-anchor="start" font-weight="bold">100Hz</text><text x="171.9" y="720" text-anchor="middle">200Hz</text><text x="217.3" y="720" text-anchor="middle">300Hz</text><text x="274.5" y="720" text-anchor="middle">500Hz</text><text x="352.2" y="720" text-anchor="middle" font-weight="bold">1000Hz</text><text x="429.9" y="720" text-anchor="middle">2000Hz</text><text x="507.5" y="720" text-anchor="middle">4000Hz</text><text x="570.2" y="720" text-anchor="middle">7000Hz</text><text x="708.0" y="720" text-anchor="end">20000Hz</text></g><g stroke="#000"><path d="M94.5 704v4"/><path d="M171.5 704v3"/><path d="M217.5 704v3"/><path d="M249.5 704v3"/><path d="M274.5 704v3"/><path d="M294.5 704v3"/><path d="M312.5 704v3"/><path d="M327.5 704v3"/><path d="M340.5 704v3"/><path d="M352.5 704v4"/><path d="M429.5 704v3"/><path d="M475.5 704v3"/><path d="M507.5 704v3"/><path d="M532.5 704v3"/><path d="M552.5 704v3"/><path d="M570.5 704v3"/><path d="M585.5 704v3"/><path d="M598.5 704v3"/><path d="M687.5 704v3"/></g></svg>
<div class="t" style="left:91px;top:736px;font-size:13.300px;letter-spacing:-.5px">İmleç: 4024 Hz (B7) = -39 dB</div>
<div class="t" style="left:265px;top:736px;font-size:13.300px;letter-spacing:-.5px">Tepe: 3990 Hz (B7) = -39,4 dB</div>
<div class="t" style="left:45px;top:774px">Algoritma:</div>
<div class="combo" style="left:119px;top:768px;width:181px;height:25px"><div class="t" style="left:7px;top:4.500px;font-size:13.300px">Spektrum</div><div class="sep"></div><svg width="9" height="12" viewBox="0 0 9 12"><path d="M1 4.500 L4.500 1 L8 4.500 M1 7.500 L4.500 11 L8 7.500" fill="none" stroke="#333" stroke-width="1.200"/></svg></div>
<div class="t" style="left:311px;top:774px">Boyut:</div>
<div class="combo" style="left:363px;top:768px;width:139px;height:25px"><div class="t" style="left:7px;top:4.500px;font-size:13.300px">512</div><div class="sep"></div><svg width="9" height="12" viewBox="0 0 9 12"><path d="M1 4.500 L4.500 1 L8 4.500 M1 7.500 L4.500 11 L8 7.500" fill="none" stroke="#333" stroke-width="1.200"/></svg></div>
<div class="t" style="left:45px;top:809px">İşlev:</div>
<div class="combo" style="left:119px;top:803px;width:181px;height:25px"><div class="t" style="left:7px;top:4.500px;font-size:13.300px">Hanning pencere</div><div class="sep"></div><svg width="9" height="12" viewBox="0 0 9 12"><path d="M1 4.500 L4.500 1 L8 4.500 M1 7.500 L4.500 11 L8 7.500" fill="none" stroke="#333" stroke-width="1.200"/></svg></div>
<div class="t" style="left:311px;top:809px">Eksen:</div>
<div class="combo" style="left:363px;top:803px;width:139px;height:25px"><div class="t" style="left:7px;top:4.500px;font-size:13.300px"><span style="letter-spacing:-.25px">Günlükleme sıklığı</span></div><div class="sep"></div><svg width="9" height="12" viewBox="0 0 9 12"><path d="M1 4.500 L4.500 1 L8 4.500 M1 7.500 L4.500 11 L8 7.500" fill="none" stroke="#333" stroke-width="1.200"/></svg></div>
<div class="a" style="left:525px;top:767px;width:82px;height:27px;border:1px solid #b0b0b0;border-radius:4px;background:linear-gradient(#fefefe 0,#f0f0f0 48%,#e2e2e2 52%,#e6e6e6 80%,#f2f2f2 100%);box-shadow:0 1px 0 #f4f4f4"><div class="t" style="left:0;width:100%;text-align:center;top:6px">V<u>e</u>r...</div></div>
<div class="a" style="left:625px;top:767px;width:82px;height:27px;border:1px solid #b0b0b0;border-radius:4px;background:linear-gradient(#fefefe 0,#f0f0f0 48%,#e2e2e2 52%,#e6e6e6 80%,#f2f2f2 100%);box-shadow:0 1px 0 #f4f4f4"><div class="t" style="left:0;width:100%;text-align:center;top:6px"><u>Y</u>eniden Çiz</div></div>
<div class="a" style="left:526px;top:803px;width:81px;height:26px;border:1px solid #8aa8c4;border-radius:4px;background:linear-gradient(#e4eff8 0,#d2e4f2 48%,#b9d5ea 52%,#c4dcee 80%,#d6e8f5 100%);box-shadow:0 1px 0 #f4f4f4"><div class="t" style="left:0;width:100%;text-align:center;top:6px">Kapat</div></div>
<div class="t" style="left:628px;top:812.500px">Izgaralar</div>
<div class="a" style="left:690px;top:812px;width:13px;height:13px;background:linear-gradient(#d8eaf8,#b8d8f0);border:1px solid #4a8ac4;border-radius:2px"></div>
<svg class="a" style="left:691px;top:811px" width="14" height="13" viewBox="0 0 14 13"><path d="M2.500 6.500 L5.500 10 L11.500 2" fill="none" stroke="#0a0a1a" stroke-width="2.200"/></svg>
<div class="a" style="left:35px;top:838px;width:680px;height:20px;background:#f6f4f2"></div>
<div class="a" style="left:37px;top:838px;width:676px;height:18px;background:#e2e2e2;border:1px solid #8a8a8a;border-right-color:#fafafa;border-bottom-color:#e2e2e2"></div>
<svg class="a" style="left:702px;top:846px" width="11" height="11" viewBox="0 0 11 11"><path d="M10 2v1M8 4v1M10 4v1M6 6v1M8 6v1M10 6v1M4 8v1M6 8v1M8 8v1M10 8v1" stroke="#b8b8b8" stroke-width="1"/></svg>
<div class="t dv" style="left:313px;top:408px;font-size:18.600px;font-weight:bold;font-style:oblique;color:#f01010;transform:scaleY(1.15);transform-origin:0 85%">BU ŞEKİLDE OKUMA HATASI OLUR</div>
<svg class="a" style="left:300px;top:420px" width="420" height="420" viewBox="300 420 420 420" fill="none" stroke="#f01010" stroke-width="2" stroke-linecap="round">
<path d="M484 431 L465.500 580 L441 795" stroke-width="2.200"/>
<path d="M430 764 L441 795 L457 763"/>
<path d="M506 803 C540 768 585 722 608 702 C635 680 660 660 679 642"/>
<path d="M644.500 658 L674 642.300 M657.500 674.400 L680.300 642"/>
<rect x="350" y="803" width="159" height="28" stroke-width="2" stroke-linecap="butt"/>
<path d="M455.500 734.500 l.5 .5" stroke-width="1.500"/>
</svg>
<!-- ===== h scrollbar ===== -->
<div class="a" style="left:10px;top:888px;width:964px;height:20px;background:#e1e1e1"></div>
<div class="a" style="left:160px;top:890px;width:781px;height:16px;border:1px solid #c2c2c2;border-radius:4px;background:linear-gradient(#e4e4e4,#efefef)"></div>
<div class="a" style="left:526px;top:890px;width:413px;height:16px;border:1px solid #1c80c8;border-radius:4px;background:linear-gradient(#8ad4fa 0,#4cb8f6 12%,#58c0f8 46%,#2aa4f0 52%,#26a2ee 85%,#3cb0f3 100%);box-shadow:inset 0 0 0 1px rgba(170,225,255,.55)"></div>
<div class="a" style="left:526px;top:890px;width:413px;height:16px;border-radius:4px;background:linear-gradient(90deg,rgba(20,130,220,.3) 0,rgba(255,255,255,0) 25%,rgba(255,255,255,.38) 50%,rgba(255,255,255,0) 75%,rgba(20,130,220,.3) 100%)"></div>
<svg class="a" style="left:149px;top:892px" width="8" height="11" viewBox="0 0 8 11"><path d="M6 1.500 L2 5.500 L6 9.500" fill="none" stroke="#333" stroke-width="1.400"/></svg>
<svg class="a" style="left:944px;top:892px" width="8" height="11" viewBox="0 0 8 11"><path d="M2 1.500 L6 5.500 L2 9.500" fill="none" stroke="#333" stroke-width="1.400"/></svg>
<!-- ===== selection toolbar ===== -->
<div class="a" style="left:10px;top:908px;width:964px;height:1px;background:#a8a8a8"></div>
<div class="grab" style="left:11px;top:910px;height:53px"></div>
<div class="t" style="left:23px;top:916px">Proje Hızı (Hz):</div>
<div class="a" style="left:23px;top:933px;width:77px;height:25px;border:1px solid #b4b4b4;border-radius:4px;background:linear-gradient(90deg,#fff 0,#fff 52px,#c8c8c8 52px,#c8c8c8 53px,#f4f4f4 53px,#e4e4e4 100%)"></div>
<div class="t" style="left:28px;top:940px;letter-spacing:-.7px">48000</div>
<svg class="a" style="left:82px;top:941px" width="12" height="8" viewBox="0 0 12 8"><path d="M1.500 1.500 L6 6 L10.500 1.500" fill="none" stroke="#333" stroke-width="1.500"/></svg>
<div class="a" style="left:138px;top:932px;width:1px;height:26px;background:#c4c4c4"></div>
<div class="t" style="left:148px;top:940px">Şuna Uy</div>
<div class="a" style="left:209px;top:940px;width:12px;height:12px;border:1px solid #b0b0b0;border-radius:3px;background:#fff"></div>
<div class="t" style="left:233px;top:916px">Seçim Başlangıcı:</div>
<div class="a" style="left:370px;top:915.500px;width:13px;height:13px;border-radius:50%;background:#fff;border:1px solid #5a8ab8"></div>
<div class="a" style="left:374px;top:919.500px;width:5px;height:5px;border-radius:50%;background:#1a5a9c"></div>
<div class="t" style="left:388px;top:916px">Bitiş</div>
<div class="a" style="left:421px;top:915.500px;width:13px;height:13px;border-radius:50%;background:#fff;border:1px solid #b0b0b0"></div>
<div class="t" style="left:439px;top:916px">Uzunluk</div>
<div class="a" style="left:503px;top:933px;width:1px;height:25px;background:#c8c8c8"></div>
<div class="t" style="left:510px;top:916px">Ses Konumu:</div>
<div class="a" style="left:233px;top:934px;width:128px;height:22px;background:#d9d9d9;border:1px solid #8c8c8c;border-right-color:#fafafa;border-bottom-color:#fafafa"></div><svg class="a" style="left:233px;top:934px" width="128" height="22" viewBox="0 0 128 22"><g font-family="DejaVu Sans,Liberation Sans,sans-serif"><text x="4.9" y="15" font-size="13.500" font-family="DejaVu Sans Condensed,Liberation Sans,sans-serif" fill="#2020c8">0</text><text x="15.1" y="15" font-size="13.500" font-family="DejaVu Sans Condensed,Liberation Sans,sans-serif" fill="#2020c8">0</text><text x="43.1" y="15" font-size="13.500" font-family="DejaVu Sans Condensed,Liberation Sans,sans-serif" fill="#2020c8">0</text><text x="53.3" y="15" font-size="13.500" font-family="DejaVu Sans Condensed,Liberation Sans,sans-serif" fill="#2020c8">0</text><text x="82.7" y="15" font-size="13.500" font-family="DejaVu Sans Condensed,Liberation Sans,sans-serif" fill="#2020c8">1</text><text x="92.9" y="15" font-size="13.500" font-family="DejaVu Sans Condensed,Liberation Sans,sans-serif" fill="#2020c8">9</text><text x="26.0" y="15" font-size="10.600" fill="#000">sa</text><text x="65.5" y="15" font-size="10.600" fill="#000">dk</text><text x="104.0" y="15" font-size="10.600" fill="#000">sn</text></g><rect x="118.500" y="2.500" width="8" height="17" fill="#e0e0e0" stroke="#fafafa"/><path d="M127 2 v18 h-9" fill="none" stroke="#8a8a8a"/><path d="M119.500 9 h6.500 l-3.250 5z" fill="#000"/></svg>
<div class="a" style="left:368px;top:934px;width:128px;height:22px;background:#d9d9d9;border:1px solid #8c8c8c;border-right-color:#fafafa;border-bottom-color:#fafafa"></div><svg class="a" style="left:368px;top:934px" width="128" height="22" viewBox="0 0 128 22"><g font-family="DejaVu Sans,Liberation Sans,sans-serif"><text x="4.9" y="15" font-size="13.500" font-family="DejaVu Sans Condensed,Liberation Sans,sans-serif" fill="#2020c8">0</text><text x="15.1" y="15" font-size="13.500" font-family="DejaVu Sans Condensed,Liberation Sans,sans-serif" fill="#2020c8">0</text><text x="43.1" y="15" font-size="13.500" font-family="DejaVu Sans Condensed,Liberation Sans,sans-serif" fill="#2020c8">0</text><text x="53.3" y="15" font-size="13.500" font-family="DejaVu Sans Condensed,Liberation Sans,sans-serif" fill="#2020c8">0</text><text x="82.7" y="15" font-size="13.500" font-family="DejaVu Sans Condensed,Liberation Sans,sans-serif" fill="#2020c8">1</text><text x="92.9" y="15" font-size="13.500" font-family="DejaVu Sans Condensed,Liberation Sans,sans-serif" fill="#2020c8">9</text><text x="26.0" y="15" font-size="10.600" fill="#000">sa</text><text x="65.5" y="15" font-size="10.600" fill="#000">dk</text><text x="104.0" y="15" font-size="10.600" fill="#000">sn</text></g><rect x="118.500" y="2.500" width="8" height="17" fill="#e0e0e0" stroke="#fafafa"/><path d="M127 2 v18 h-9" fill="none" stroke="#8a8a8a"/><path d="M119.500 9 h6.500 l-3.250 5z" fill="#000"/></svg>
<div class="a" style="left:510px;top:934px;width:128px;height:22px;background:#d9d9d9;border:1px solid #8c8c8c;border-right-color:#fafafa;border-bottom-color:#fafafa"></div><svg class="a" style="left:510px;top:934px" width="128" height="22" viewBox="0 0 128 22"><g font-family="DejaVu Sans,Liberation Sans,sans-serif"><text x="4.9" y="15" font-size="13.500" font-family="DejaVu Sans Condensed,Liberation Sans,sans-serif" fill="#2020c8">0</text><text x="15.1" y="15" font-size="13.500" font-family="DejaVu Sans Condensed,Liberation Sans,sans-serif" fill="#2020c8">0</text><text x="43.1" y="15" font-size="13.500" font-family="DejaVu Sans Condensed,Liberation Sans,sans-serif" fill="#2020c8">0</text><text x="53.3" y="15" font-size="13.500" font-family="DejaVu Sans Condensed,Liberation Sans,sans-serif" fill="#2020c8">1</text><text x="82.7" y="15" font-size="13.500" font-family="DejaVu Sans Condensed,Liberation Sans,sans-serif" fill="#2020c8">3</text><text x="92.9" y="15" font-size="13.500" font-family="DejaVu Sans Condensed,Liberation Sans,sans-serif" fill="#2020c8">4</text><text x="26.0" y="15" font-size="10.600" fill="#000">sa</text><text x="65.5" y="15" font-size="10.600" fill="#000">dk</text><text x="104.0" y="15" font-size="10.600" fill="#000">sn</text></g><rect x="118.500" y="2.500" width="8" height="17" fill="#e0e0e0" stroke="#fafafa"/><path d="M127 2 v18 h-9" fill="none" stroke="#8a8a8a"/><path d="M119.500 9 h6.500 l-3.250 5z" fill="#000"/></svg>
<!-- ===== status bar ===== -->
<div class="a" style="left:10px;top:963px;width:964px;height:1px;background:#a8a8a8"></div>
<div class="a" style="left:11px;top:966px;width:810px;height:22px;border:1px solid #9a9a9a;border-right-color:#fafafa;border-bottom-color:#fafafa"></div>
<div class="a" style="left:822px;top:966px;width:150px;height:22px;border:1px solid #9a9a9a;border-right-color:#fafafa;border-bottom-color:#fafafa"></div>
<div class="t" style="left:15px;top:970.500px;font-size:13.300px;letter-spacing:-.24px">Sesi seçmek için tıklayıp sürükleyin</div>
<div class="t" style="left:826px;top:970.500px;font-size:13.300px;letter-spacing:-.36px">Geçerli Hız: 48000</div>
<svg class="a" style="left:960px;top:977px" width="11" height="11" viewBox="0 0 11 11"><path d="M10 2v1M8 4v1M10 4v1M6 6v1M8 6v1M10 6v1M4 8v1M6 8v1M8 8v1M10 8v1" stroke="#b4b4b4" stroke-width="1"/></svg>
</div>
</body></html>
